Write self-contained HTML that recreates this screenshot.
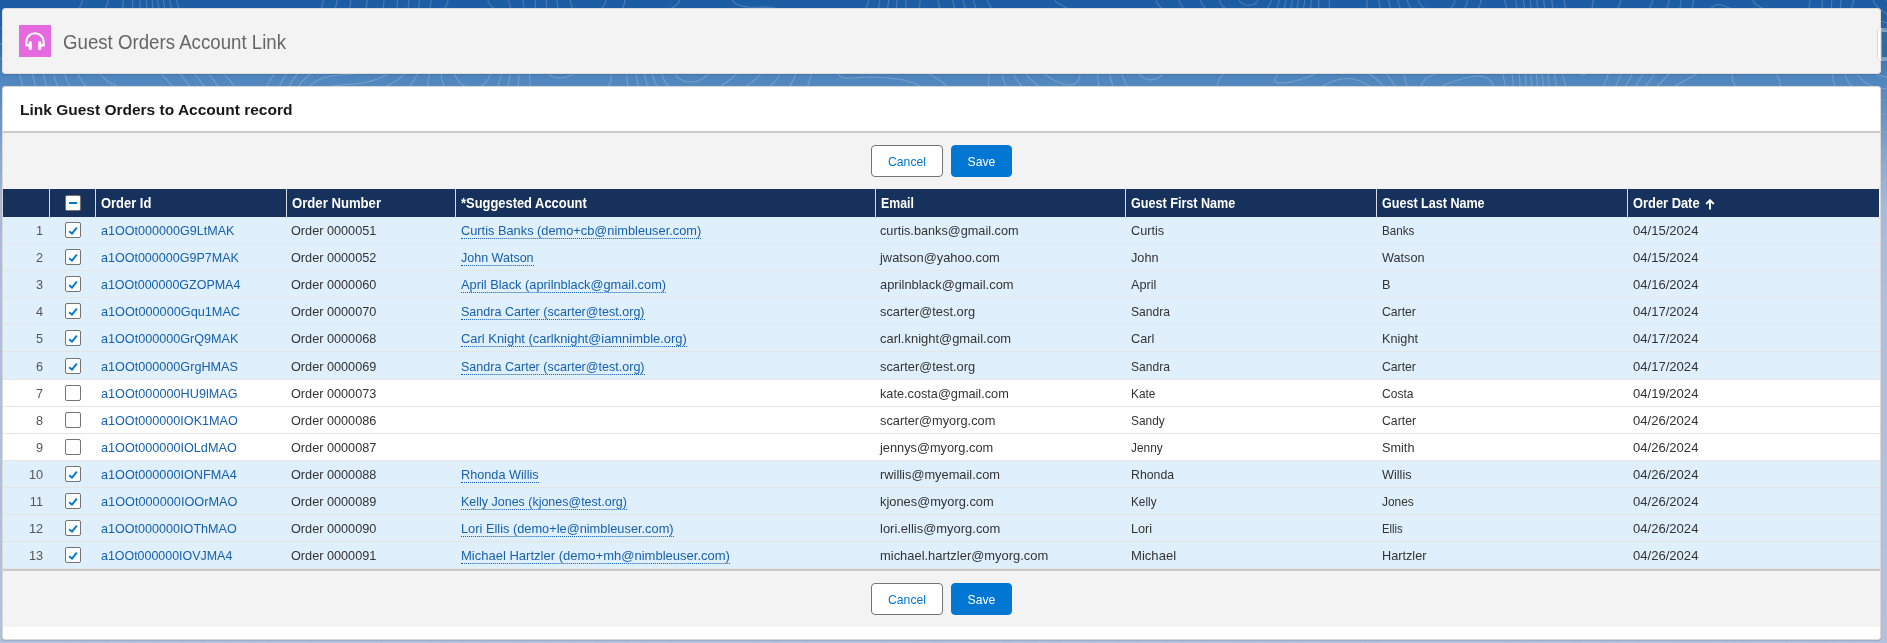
<!DOCTYPE html><html><head><meta charset="utf-8"><style>
*{box-sizing:border-box;margin:0;padding:0}
html,body{width:1887px;height:643px;overflow:hidden}
body{position:relative;font-family:"Liberation Sans",sans-serif;
 background:linear-gradient(180deg,#1c5ca2 0px,#2564a9 30px,#5087bf 80px,#6a96c8 120px,#8eabd3 165px,#a6bad9 210px,#adbfdc 300px,#b1c2dd 643px);}
.abs{position:absolute}
.card1{left:2px;top:8px;width:1879px;height:66px;background:#f3f3f3;border-radius:3px;box-shadow:0 1px 1px rgba(0,0,0,.10);border:1px solid #e0dcd8}
.icon{left:19px;top:25px;width:32px;height:32px;background:#e56ae0}
.title1{left:63px;top:30.5px;font-size:20px;line-height:23px;color:#666;white-space:nowrap;transform:scaleX(0.933);transform-origin:0 0}
.card2{left:2px;top:86px;width:1879px;height:554px;background:#fff;border-radius:3px;box-shadow:0 1px 1px rgba(0,0,0,.12);border:1px solid #dcd8d4;overflow:hidden}
.title2{left:20px;top:101px;font-size:15.5px;line-height:18px;font-weight:700;color:#181818;white-space:nowrap}
.hdrline{left:3px;top:131px;width:1877px;height:2px;background:#c9c9c9}
.bar{left:3px;width:1877px;background:#f3f3f3}
.btn{height:32px;border-radius:4px;font-size:12.2px;text-align:center;line-height:30px;padding-top:1px;white-space:nowrap}
.cancel{width:72px;background:#fff;border:1px solid #747474;color:#0176d3}
.save{width:61px;background:#0176d3;border:1px solid #0176d3;color:#fff}
.thead{left:3px;top:189px;width:1876px;height:28px;background:#16325c}
.th{top:5px;height:18px;color:#fff;font-weight:700;font-size:14px;line-height:18px;white-space:nowrap;transform-origin:0 0}
.thsep{top:0;width:1px;height:28px;background:#d8dde6}
.row{left:3px;width:1877px;border-bottom:1px solid #e5e5e5}
.sel{background:#dfeffc}
.unsel{background:#fff}
.td{font-size:12.7px;line-height:15px;color:#333;white-space:nowrap}
.num{text-align:right;width:40px;color:#555}
.lnk{color:#1660b0}
.ul{border-bottom:1px dotted #0b5cab;padding-bottom:0}
.cb{width:16px;height:16px;background:#fff;border:1px solid #747474;border-radius:2px}
</style></head><body><div id="wrap" style="position:absolute;left:0;top:0;width:1887px;height:643px;will-change:transform">
<svg class="abs" style="left:0;top:0" width="1887" height="643" viewBox="0 0 1887 643"><path d="M176.8 0.0 L177.0 2.2 L177.8 5.0 L178.6 7.0 L179.7 9.0 L180.8 11.0 M319.3 11.0 L320.5 9.0 L321.6 7.0 L322.4 5.0 L323.0 3.0 L323.4 0.0 M169.7 0.0 L170.0 3.0 L170.4 5.0 L171.1 7.0 L172.0 9.4 L172.7 11.0 M334.2 11.0 L335.0 8.9 L335.9 6.0 L336.4 4.0 L336.8 1.0 L336.8 0.0 M1564.3 0.0 L1564.5 3.0 L1565.0 5.6 L1565.6 8.0 L1566.3 10.0 L1566.6 11.0 M1591.0 10.4 L1591.8 8.0 L1592.4 6.0 L1593.0 3.1 L1593.2 1.0 L1593.3 0.0 M691.2 82.0 L694.0 81.7 L696.9 81.0 L699.0 80.3 L701.0 79.4 L703.0 78.3 L704.9 77.0 L706.2 76.0 L708.0 74.5 L709.4 73.0 L711.0 71.0 L711.7 70.0 M673.2 70.0 L674.0 72.1 L675.0 74.0 L676.5 76.0 L678.0 77.5 L679.9 79.0 L681.6 80.0 L684.0 81.0 L686.0 81.6 L689.0 82.0 L691.0 82.0 L691.2 82.0 M163.6 0.0 L163.8 3.0 L164.1 5.0 L164.9 8.0 L165.5 10.0 L165.8 11.0 M221.1 70.0 L222.8 72.0 L224.0 73.5 L225.3 75.0 L226.9 77.0 L228.0 78.3 L229.4 80.0 L231.0 81.9 L232.0 83.1 L233.7 85.0 L235.0 86.4 L236.5 88.0 L238.0 89.4 M264.0 89.6 L265.2 88.0 L266.6 86.0 L267.9 84.0 L269.0 82.3 L270.0 80.7 L271.1 79.0 L272.3 77.0 L273.6 75.0 L274.9 73.0 L276.0 71.4 L277.0 70.0 M349.0 10.2 L349.6 8.0 L350.1 6.0 L350.5 3.0 L350.7 0.0 M1239.4 0.0 L1240.2 2.0 L1242.0 3.4 L1244.0 4.4 L1246.3 5.0 L1249.0 5.2 L1251.3 5.0 L1254.0 4.2 L1256.0 3.1 L1257.0 2.0 L1257.8 0.0 M1552.0 0.0 L1552.1 2.0 L1552.4 5.0 L1552.9 8.0 L1553.3 10.0 L1553.5 11.0 M1577.0 70.7 L1578.1 72.0 L1580.0 73.8 L1582.0 74.8 L1585.0 74.7 L1587.0 73.6 L1588.6 72.0 L1590.0 70.0 M1616.0 11.0 L1617.2 9.0 L1618.3 7.0 L1619.4 5.0 L1620.3 3.0 L1620.8 0.0 M715.0 89.5 L717.0 88.4 L719.0 87.2 L721.0 86.0 L722.6 85.0 L724.1 84.0 L726.0 82.7 L728.0 81.3 L729.7 80.0 L731.0 78.9 L733.0 77.2 L734.3 76.0 L736.0 74.3 L737.2 73.0 L738.8 71.0 L739.0 70.8 M660.8 70.0 L661.2 72.0 L662.0 75.0 L662.8 77.0 L663.7 79.0 L664.8 81.0 L666.0 82.9 L667.0 84.2 L668.5 86.0 L670.0 87.5 L671.8 89.0 L672.0 89.2 M157.8 0.0 L158.0 3.0 L158.2 5.0 L158.8 8.0 L159.3 10.0 L159.6 11.0 M206.0 70.4 L207.4 72.0 L209.0 74.0 L210.0 75.3 L211.3 77.0 L212.8 79.0 L214.0 80.6 L215.0 82.0 L216.4 84.0 L217.8 86.0 L219.0 87.7 L220.0 89.2 M278.0 89.2 L279.0 87.0 L280.0 85.0 L281.0 83.0 L282.0 81.1 L283.0 79.4 L284.0 77.7 L285.0 76.0 L286.4 74.0 L287.8 72.0 L289.0 70.5 M365.6 11.0 L366.0 9.0 L366.6 6.0 L367.0 3.0 L367.1 1.0 L367.1 0.0 M570.4 0.0 L570.7 3.0 L571.3 5.0 L572.1 7.0 L573.1 9.0 L574.0 10.3 M599.0 10.7 L600.9 9.0 L602.0 7.9 L603.5 6.0 L604.7 4.0 L605.5 2.0 L605.8 0.0 M1219.7 0.0 L1220.1 2.0 L1221.1 4.0 L1222.7 6.0 L1224.0 7.2 L1226.0 8.9 L1227.5 10.0 L1228.0 10.3 M1265.0 10.4 L1266.5 9.0 L1268.0 7.3 L1269.0 5.9 L1270.1 4.0 L1271.0 1.1 L1271.1 0.0 M1543.9 0.0 L1544.0 3.0 L1544.2 5.0 L1544.7 8.0 L1545.1 10.0 L1545.3 11.0 M1561.8 70.0 L1562.2 72.0 L1562.9 75.0 L1563.4 77.0 L1564.0 79.3 L1564.7 82.0 L1565.3 84.0 L1566.0 86.4 L1566.9 89.0 L1567.0 89.3 M1601.0 89.2 L1602.0 87.8 L1603.1 86.0 L1604.2 84.0 L1605.2 82.0 L1606.1 80.0 L1607.0 77.7 L1607.9 75.0 L1608.5 73.0 L1609.0 71.0 L1609.3 70.0 M1647.0 10.4 L1648.2 9.0 L1649.9 7.0 L1651.0 5.4 L1652.0 3.4 L1652.7 1.0 L1652.8 0.0 M741.0 89.2 L743.0 88.1 L744.7 87.0 L746.3 86.0 L748.0 84.9 L750.0 83.5 L752.0 82.1 L753.4 81.0 L755.0 79.6 L756.8 78.0 L758.0 76.8 L759.7 75.0 L761.0 73.4 L762.1 72.0 L763.0 70.6 M652.0 71.0 L652.4 73.0 L653.0 75.8 L653.6 78.0 L654.3 80.0 L655.1 82.0 L656.0 84.0 L657.1 86.0 L658.3 88.0 L659.7 90.0 M152.1 0.0 L152.3 3.0 L152.6 6.0 L153.0 8.2 L153.5 11.0 M192.0 70.8 L193.0 72.0 L194.7 74.0 L196.0 75.5 L197.2 77.0 L198.7 79.0 L200.0 80.7 L201.0 82.1 L202.3 84.0 L203.7 86.0 L205.0 88.0 L206.0 89.6 M287.3 90.0 L288.2 88.0 L289.3 86.0 L290.3 84.0 L291.5 82.0 L292.8 80.0 L294.0 78.3 L295.0 77.0 L296.6 75.0 L298.0 73.5 L299.5 72.0 L301.0 70.6 M382.7 11.0 L383.1 9.0 L383.6 6.0 L383.9 3.0 L384.0 0.3 L384.0 0.0 M557.0 0.0 L557.2 3.0 L557.5 6.0 L558.0 8.9 L558.4 11.0 M621.0 10.9 L622.2 9.0 L623.2 7.0 L624.0 5.0 L624.8 2.0 L625.0 0.0 M679.7 0.0 L679.0 2.1 L677.4 4.0 L676.0 5.2 L674.0 6.7 L672.1 8.0 L670.7 9.0 L669.0 10.1 M643.8 70.0 L644.1 72.0 L644.6 75.0 L645.0 77.0 L645.7 80.0 L646.3 82.0 L647.0 84.1 L648.0 86.7 L649.0 88.9 L649.6 90.0 M766.0 89.3 L767.8 88.0 L769.1 87.0 L771.0 85.4 L772.4 84.0 L774.0 82.3 L775.2 81.0 L776.7 79.0 L778.0 77.1 L779.0 75.6 L780.0 73.8 L781.0 71.9 L781.9 70.0 M779.0 10.3 L777.0 9.2 L775.0 8.3 L773.0 7.8 L770.0 7.2 L767.0 7.1 L764.0 7.1 L761.0 7.1 L758.0 7.3 L755.0 7.3 L752.0 7.3 L749.0 7.1 L747.0 6.9 L744.0 6.4 L742.0 6.0 L739.0 5.1 L737.0 4.2 L735.0 3.2 L733.5 2.0 L732.5 0.0 M1200.8 0.0 L1201.1 2.0 L1202.0 4.0 L1203.4 6.0 L1205.0 7.9 L1206.1 9.0 L1208.0 10.8 M1275.0 10.8 L1276.2 9.0 L1277.3 7.0 L1278.1 5.0 L1279.0 2.0 L1279.2 0.0 M1536.9 0.0 L1537.0 2.5 L1537.3 5.0 L1537.8 8.0 L1538.2 10.0 L1538.4 11.0 M1553.8 70.0 L1554.1 72.0 L1554.6 75.0 L1555.0 77.2 L1555.5 80.0 L1555.9 83.0 L1556.3 85.0 L1556.8 88.0 L1557.0 89.4 M1613.2 90.0 L1614.5 88.0 L1615.6 86.0 L1616.6 84.0 L1617.6 82.0 L1618.5 80.0 L1619.3 78.0 L1620.1 76.0 L1621.0 73.3 L1621.7 71.0 L1622.0 70.2 M1666.0 10.1 L1667.0 8.0 L1667.8 6.0 L1668.5 4.0 L1669.0 1.0 L1669.0 0.0 M1074.0 84.0 L1075.7 83.0 L1077.0 81.9 L1078.3 80.0 L1079.2 78.0 L1080.0 75.2 L1080.3 73.0 L1080.4 70.0 M1041.0 70.4 L1042.5 72.0 L1044.0 73.5 L1045.8 75.0 L1047.1 76.0 L1049.0 77.3 L1051.0 78.5 L1053.0 79.6 L1055.0 80.7 L1057.0 81.6 L1059.0 82.4 L1061.0 83.1 L1063.8 84.0 L1066.0 84.5 L1069.0 84.8 L1072.0 84.6 L1074.0 84.0 M146.3 0.0 L146.4 3.0 L146.7 6.0 L147.0 8.7 L147.3 11.0 M177.0 70.8 L178.1 72.0 L179.9 74.0 L181.0 75.2 L182.5 77.0 L184.0 78.8 L185.0 80.0 L186.5 82.0 L188.0 84.0 L189.0 85.4 L190.1 87.0 L191.4 89.0 L192.0 90.0 M296.3 90.0 L297.5 88.0 L298.8 86.0 L300.0 84.2 L301.0 82.9 L302.6 81.0 L304.0 79.5 L305.6 78.0 L307.0 76.8 L309.0 75.2 L310.8 74.0 L312.4 73.0 L314.2 72.0 L316.2 71.0 L317.0 70.6 M396.4 11.0 L396.9 8.0 L397.1 6.0 L397.4 3.0 L397.5 0.0 M546.1 0.0 L546.2 3.0 L546.4 6.0 L546.7 9.0 L546.9 11.0 M635.5 70.0 L636.0 73.0 L636.3 75.0 L636.8 78.0 L637.1 80.0 L637.7 83.0 L638.2 85.0 L639.0 88.0 L639.6 90.0 M787.1 90.0 L788.5 88.0 L789.8 86.0 L791.0 84.1 L792.0 82.2 L793.0 80.3 L794.0 78.1 L794.9 76.0 L795.8 74.0 L796.6 72.0 L797.0 70.8 M864.0 10.2 L865.0 8.9 L866.3 7.0 L867.3 5.0 L868.1 3.0 L868.5 0.0 M1179.2 0.0 L1179.9 3.0 L1180.9 5.0 L1182.0 6.5 L1183.2 8.0 L1184.9 10.0 L1185.0 10.1 M1283.0 10.4 L1284.0 8.2 L1284.8 6.0 L1285.4 4.0 L1285.9 1.0 L1285.9 0.0 M1530.3 0.0 L1530.4 3.0 L1530.9 6.0 L1531.2 8.0 L1531.9 11.0 M1547.3 70.0 L1547.8 73.0 L1548.0 75.0 L1548.4 78.0 L1548.8 81.0 L1549.0 83.0 L1549.3 86.0 L1549.6 89.0 L1549.7 90.0 M1624.0 89.1 L1625.0 87.5 L1626.0 85.8 L1627.0 84.0 L1628.1 82.0 L1629.1 80.0 L1630.1 78.0 L1631.0 76.0 L1632.0 73.8 L1633.0 71.5 L1633.6 70.0 M1679.0 10.0 L1679.7 8.0 L1680.3 6.0 L1680.9 3.0 L1681.1 1.0 L1681.2 0.0 M1099.1 90.0 L1099.0 88.0 L1098.7 85.0 L1098.4 82.0 L1098.0 79.0 L1097.7 77.0 L1097.2 74.0 L1096.9 72.0 L1096.5 70.0 M1025.0 71.0 L1026.0 72.9 L1027.0 74.5 L1028.0 76.0 L1029.6 78.0 L1031.0 79.6 L1032.4 81.0 L1034.0 82.5 L1035.8 84.0 L1037.1 85.0 L1039.0 86.4 L1041.0 87.9 L1042.7 89.0 L1043.0 89.2 M140.0 0.0 L140.1 3.0 L140.2 6.0 L140.4 9.0 L140.6 11.0 M158.0 70.6 L159.3 72.0 L161.0 73.8 L162.2 75.0 L164.0 76.8 L165.1 78.0 L167.0 79.9 L168.0 81.0 L169.8 83.0 L171.0 84.3 L172.4 86.0 L174.0 88.0 L175.0 89.3 M307.0 89.2 L308.0 88.0 L309.9 86.0 L311.0 85.0 L313.0 83.4 L315.0 82.0 L316.7 81.0 L318.5 80.0 L320.7 79.0 L323.0 78.1 L325.0 77.5 L327.0 77.0 L330.0 76.3 L332.0 75.9 L335.0 75.5 L338.0 75.2 L340.3 75.0 L343.0 74.8 L346.0 74.6 L349.0 74.4 L352.0 74.1 L354.0 73.9 L357.0 73.6 L360.0 73.1 L362.0 72.8 L365.0 72.1 L367.0 71.6 L369.1 71.0 L370.0 70.7 M407.7 11.0 L408.0 8.9 L408.4 6.0 L408.7 3.0 L408.8 0.0 M535.2 0.0 L535.3 3.0 L535.5 6.0 L535.8 9.0 L536.0 10.5 M625.7 70.0 L626.1 72.0 L626.6 75.0 L626.9 78.0 L627.2 80.0 L627.4 83.0 L627.6 86.0 L627.7 89.0 L627.7 90.0 M806.3 90.0 L807.0 88.0 L808.0 85.0 L808.6 83.0 L809.3 81.0 L810.0 78.6 L810.8 76.0 L811.5 74.0 L812.1 72.0 L812.8 70.0 M877.3 11.0 L878.0 9.0 L878.9 6.0 L879.4 4.0 L879.8 1.0 L879.8 0.0 M987.4 0.0 L988.0 2.8 L989.0 4.7 L990.0 6.2 L991.5 8.0 L993.0 9.6 L994.0 10.7 M1012.6 70.0 L1013.2 72.0 L1014.0 74.4 L1015.0 76.8 L1016.0 78.8 L1017.0 80.4 L1018.1 82.0 L1019.6 84.0 L1021.0 85.5 L1022.5 87.0 L1024.0 88.4 L1025.0 89.2 M1113.8 90.0 L1113.0 87.0 L1112.5 85.0 L1111.9 83.0 L1111.1 80.0 L1110.6 78.0 L1110.0 75.6 L1109.3 73.0 L1108.8 71.0 L1108.6 70.0 M1071.0 10.3 L1069.0 9.2 L1067.0 8.1 L1065.0 7.0 L1063.0 6.0 L1061.0 5.0 L1059.2 4.0 L1057.5 3.0 L1056.0 1.8 L1055.0 0.0 M1156.3 0.0 L1157.0 2.6 L1158.0 4.2 L1159.4 6.0 L1161.0 7.7 L1162.3 9.0 L1164.0 10.6 M1289.6 11.0 L1290.3 9.0 L1291.0 7.0 L1291.8 4.0 L1292.1 2.0 L1292.2 0.0 M1418.8 0.0 L1419.2 2.0 L1420.1 4.0 L1421.7 6.0 L1423.0 7.2 L1425.0 8.8 L1426.9 10.0 L1427.0 10.0 M1447.0 10.6 L1449.0 9.3 L1450.6 8.0 L1452.0 6.6 L1453.2 5.0 L1454.3 3.0 L1454.9 0.0 M1523.5 0.0 L1523.7 3.0 L1524.0 5.3 L1524.5 8.0 L1525.0 10.0 M1541.5 70.0 L1541.9 73.0 L1542.2 75.0 L1542.5 78.0 L1542.8 81.0 L1543.0 83.8 L1543.1 86.0 L1543.3 89.0 L1543.4 90.0 M1633.0 89.9 L1634.3 88.0 L1635.6 86.0 L1636.9 84.0 L1638.0 82.3 L1639.0 80.6 L1640.0 78.9 L1641.1 77.0 L1642.3 75.0 L1643.4 73.0 L1644.6 71.0 L1645.0 70.2 M1691.1 11.0 L1692.0 8.1 L1692.6 6.0 L1693.0 4.0 L1693.4 1.0 L1693.4 0.0 M1753.0 0.0 L1753.6 2.0 L1755.0 3.5 L1756.8 5.0 L1758.4 6.0 L1760.2 7.0 L1762.2 8.0 L1764.3 9.0 L1766.5 10.0 L1767.0 10.2 M1808.0 10.3 L1808.8 8.0 L1809.3 6.0 L1809.9 3.0 L1810.0 1.0 L1810.1 0.0 M132.7 0.0 L132.7 3.0 L132.7 6.0 L132.7 9.0 L132.7 11.0 M98.5 70.0 L99.2 72.0 L100.4 74.0 L101.9 76.0 L103.0 77.2 L105.0 79.0 L106.3 80.0 L108.0 81.2 L110.0 82.5 L112.0 83.7 L114.0 84.7 L116.0 85.7 L118.0 86.5 L120.0 87.4 L122.0 88.1 L124.6 89.0 L125.0 89.1 M322.0 89.5 L324.0 88.5 L326.0 87.7 L328.3 87.0 L331.0 86.3 L333.0 85.9 L336.0 85.5 L339.0 85.1 L341.0 85.0 L344.0 84.7 L347.0 84.5 L350.0 84.3 L353.0 84.1 L355.0 83.9 L358.0 83.6 L361.0 83.2 L363.0 82.8 L366.0 82.3 L368.0 81.8 L371.0 81.1 L373.0 80.5 L375.0 79.8 L377.4 79.0 L379.9 78.0 L382.0 77.1 L384.0 76.1 L386.0 75.0 L387.7 74.0 L389.3 73.0 L391.0 71.8 L393.0 70.2 M418.1 11.0 L418.7 8.0 L419.0 5.7 L419.3 3.0 L419.4 0.0 M523.2 0.0 L523.3 3.0 L523.8 6.0 L524.1 8.0 L524.7 11.0 M545.0 70.9 L546.0 72.0 L548.0 73.8 L549.6 75.0 L551.2 76.0 L553.4 77.0 L556.0 77.7 L558.0 78.0 L561.0 78.0 L563.0 77.8 L566.0 77.1 L568.0 76.5 L570.0 75.8 L572.1 75.0 L574.5 74.0 L576.9 73.0 L579.0 72.1 L581.0 71.3 L582.0 71.0 M608.0 70.2 L609.4 72.0 L610.4 74.0 L611.0 76.1 L611.2 79.0 L610.9 81.0 L610.0 83.6 L609.0 85.2 L607.3 87.0 L605.9 88.0 L604.0 89.0 M925.0 89.5 L923.0 88.0 L921.5 87.0 L919.8 86.0 L918.0 85.0 L915.8 84.0 L913.4 83.0 L911.0 82.2 L909.0 81.6 L907.0 81.0 L904.0 80.3 L902.0 79.9 L899.0 79.3 L896.9 79.0 L894.0 78.6 L891.0 78.2 L888.7 78.0 L886.0 77.8 L883.0 77.5 L880.0 77.4 L877.0 77.2 L874.0 77.2 L871.0 77.1 L868.0 77.2 L865.0 77.3 L862.0 77.4 L859.0 77.6 L856.0 77.9 L854.0 78.0 L851.0 78.2 L848.0 78.3 L845.0 78.1 L843.0 77.7 L841.0 77.0 L839.0 75.2 L838.0 73.2 L837.7 71.0 L837.7 70.0 M887.0 10.7 L887.6 8.0 L888.0 6.0 L888.4 3.0 L888.6 0.0 M973.6 0.0 L974.0 2.7 L974.8 5.0 L975.7 7.0 L976.8 9.0 L978.0 10.9 M1001.6 70.0 L1001.9 73.0 L1002.2 75.0 L1002.9 78.0 L1003.4 80.0 L1004.1 82.0 L1005.0 84.0 L1006.1 86.0 L1007.5 88.0 L1009.0 89.8 M1129.0 89.9 L1128.0 88.0 L1126.9 86.0 L1125.9 84.0 L1125.0 82.0 L1124.0 79.8 L1123.0 77.4 L1122.1 75.0 L1121.4 73.0 L1120.7 71.0 L1120.4 70.0 M1296.2 11.0 L1297.0 8.2 L1297.5 6.0 L1298.0 3.5 L1298.3 1.0 L1298.3 0.0 M1407.5 0.0 L1407.9 3.0 L1408.8 5.0 L1409.9 7.0 L1411.0 8.6 L1412.1 10.0 L1412.9 11.0 M1463.0 10.8 L1464.2 9.0 L1465.4 7.0 L1466.3 5.0 L1467.0 3.0 L1467.4 0.0 M1515.8 0.0 L1516.0 3.0 L1516.3 5.0 L1517.0 7.8 L1517.6 10.0 L1517.9 11.0 M1536.0 70.0 L1536.4 73.0 L1536.7 76.0 L1537.0 79.0 L1537.1 81.0 L1537.3 84.0 L1537.4 87.0 L1537.5 90.0 M1643.0 89.5 L1644.2 88.0 L1645.7 86.0 L1647.0 84.3 L1648.0 82.9 L1649.4 81.0 L1650.9 79.0 L1652.0 77.5 L1653.1 76.0 L1654.6 74.0 L1656.0 72.1 L1657.0 70.8 M1709.0 10.5 L1710.3 9.0 L1712.0 7.4 L1713.8 6.0 L1715.7 5.0 L1718.0 4.4 L1721.0 4.7 L1723.0 5.4 L1725.0 6.2 L1727.0 7.1 L1729.0 8.1 L1731.0 9.1 L1733.0 10.1 M1821.4 11.0 L1821.9 8.0 L1822.1 6.0 L1822.3 3.0 L1822.4 0.0 M123.3 0.0 L123.1 3.0 L123.0 5.0 L122.5 8.0 L122.0 11.0 M77.1 70.0 L77.8 73.0 L78.5 75.0 L79.4 77.0 L80.5 79.0 L81.8 81.0 L83.0 82.6 L84.2 84.0 L86.0 86.0 L87.0 87.0 L89.0 88.8 L90.0 89.7 M379.0 89.0 L381.0 88.3 L383.0 87.6 L385.0 86.8 L387.0 86.0 L389.2 85.0 L391.1 84.0 L393.0 83.0 L395.0 81.8 L397.0 80.4 L398.9 79.0 L400.1 78.0 L402.0 76.2 L403.2 75.0 L405.0 73.0 L406.0 71.7 L407.0 70.4 M429.1 11.0 L429.9 8.0 L430.4 6.0 L430.9 3.0 L431.1 1.0 L431.1 0.0 M508.7 0.0 L509.0 2.4 L509.7 5.0 L510.4 7.0 L511.2 9.0 L512.0 10.8 M528.6 70.0 L529.0 72.6 L529.4 75.0 L529.7 78.0 L530.0 80.4 L530.2 83.0 L530.4 86.0 L530.5 89.0 L530.5 90.0 M1504.8 0.0 L1505.0 2.2 L1505.7 5.0 L1506.5 7.0 L1507.4 9.0 L1508.0 10.4 M1530.5 70.0 L1530.9 73.0 L1531.1 75.0 L1531.4 78.0 L1531.6 81.0 L1531.7 84.0 L1531.8 87.0 L1531.7 90.0 M1374.0 89.5 L1372.1 88.0 L1370.8 87.0 L1369.0 85.8 L1367.0 84.5 L1365.0 83.4 L1363.0 82.4 L1361.0 81.5 L1359.0 80.7 L1356.7 80.0 L1354.0 79.3 L1352.0 79.0 L1349.0 78.7 L1346.0 78.6 L1343.0 78.8 L1341.0 79.1 L1338.0 79.7 L1336.0 80.3 L1333.7 81.0 L1331.0 82.0 L1329.0 82.9 L1327.0 83.8 L1325.0 84.8 L1323.0 85.9 L1321.0 87.0 L1319.3 88.0 L1317.7 89.0 L1317.0 89.4 M950.0 89.4 L948.7 88.0 L947.0 86.3 L945.6 85.0 L944.0 83.7 L942.0 82.1 L940.5 81.0 L939.0 79.9 L937.0 78.6 L935.0 77.3 L933.0 76.1 L931.1 75.0 L929.2 74.0 L927.3 73.0 L925.2 72.0 L923.0 71.0 L923.0 71.0 M895.8 11.0 L896.1 9.0 L896.5 6.0 L896.8 3.0 L896.9 0.0 M963.3 0.0 L963.7 3.0 L964.2 5.0 L965.0 7.1 L966.0 9.3 L966.8 11.0 M989.6 70.0 L989.3 73.0 L989.0 75.7 L988.7 78.0 L988.5 81.0 L988.5 84.0 L988.8 87.0 L989.3 89.0 L989.7 90.0 M1217.3 90.0 L1217.3 87.0 L1217.7 84.0 L1218.2 82.0 L1219.0 80.0 L1220.1 78.0 L1221.6 76.0 L1223.0 74.4 L1224.6 73.0 L1226.0 71.9 L1228.0 70.6 M1303.0 10.4 L1303.5 8.0 L1304.0 5.6 L1304.4 3.0 L1304.5 0.0 M1398.0 0.0 L1398.1 2.0 L1399.0 5.0 L1399.8 7.0 L1400.9 9.0 L1402.0 10.9 M1476.3 11.0 L1477.6 9.0 L1478.8 7.0 L1479.8 5.0 L1480.6 3.0 L1481.0 0.6 L1481.0 0.0 M1654.0 89.6 L1655.5 88.0 L1657.0 86.4 L1658.3 85.0 L1660.0 83.3 L1661.2 82.0 L1663.0 80.1 L1664.1 79.0 L1666.0 77.1 L1667.1 76.0 L1669.0 74.2 L1670.3 73.0 L1672.0 71.4 L1673.0 70.5 M1831.0 10.6 L1831.3 8.0 L1831.6 5.0 L1831.8 2.0 L1831.8 0.0 M1155.0 79.2 L1152.0 79.8 L1149.0 79.6 L1146.4 79.0 L1144.1 78.0 L1142.5 77.0 L1141.0 75.8 L1139.1 74.0 L1138.0 72.7 L1136.8 71.0 L1136.1 70.0 M1165.9 70.0 L1164.7 72.0 L1163.2 74.0 L1162.0 75.2 L1160.0 76.8 L1158.0 78.0 L1156.0 78.9 L1155.0 79.2 M108.1 0.0 L107.9 2.0 L107.0 5.0 L106.1 7.0 L105.0 8.8 L104.0 10.3 M64.0 70.4 L64.5 73.0 L65.0 75.0 L66.0 78.0 L66.8 80.0 L67.7 82.0 L68.8 84.0 L70.0 86.0 L71.0 87.6 L72.0 89.0 L72.8 90.0 M487.8 0.0 L488.3 2.0 L489.5 4.0 L491.0 5.7 L492.2 7.0 L494.0 8.8 L495.1 10.0 L496.0 11.0 M518.8 70.0 L518.9 73.0 L518.8 76.0 L518.7 79.0 L518.5 82.0 L518.2 85.0 L517.9 87.0 L517.4 90.0 M406.0 89.3 L407.5 88.0 L409.0 86.6 L410.4 85.0 L412.0 83.0 L413.0 81.6 L414.0 80.0 L415.2 78.0 L416.3 76.0 L417.3 74.0 L418.2 72.0 L419.0 70.2 M443.0 11.0 L444.2 9.0 L445.4 7.0 L446.5 5.0 L447.4 3.0 L448.0 0.5 L448.0 0.0 M953.0 0.0 L953.1 2.0 L953.7 5.0 L954.3 7.0 L955.1 9.0 L955.9 11.0 M970.0 70.5 L968.0 71.6 L966.0 72.3 L963.0 72.6 L960.0 72.4 L957.6 72.0 L955.0 71.3 L954.0 71.0 M905.4 11.0 L905.7 8.0 L905.9 5.0 L906.0 3.0 L906.1 0.0 M1388.8 0.0 L1389.0 2.6 L1389.5 5.0 L1390.2 7.0 L1391.0 9.0 L1392.0 11.0 M1524.8 70.0 L1525.1 72.0 L1525.4 75.0 L1525.7 78.0 L1525.9 81.0 L1526.0 84.0 L1526.0 86.0 L1526.0 88.7 L1526.0 90.0 M1386.0 89.1 L1385.0 87.9 L1383.3 86.0 L1382.0 84.6 L1380.5 83.0 L1379.0 81.6 L1377.2 80.0 L1376.0 78.9 L1374.0 77.3 L1372.2 76.0 L1370.8 75.0 L1369.0 73.8 L1367.0 72.6 L1365.0 71.6 L1363.0 70.6 M1323.0 71.0 L1321.0 71.7 L1319.0 72.5 L1317.0 73.3 L1315.0 74.1 L1312.7 75.0 L1310.2 76.0 L1308.0 76.9 L1306.0 77.6 L1304.0 78.3 L1302.0 79.0 L1299.0 79.9 L1297.0 80.5 L1295.0 81.0 L1292.0 81.7 L1290.0 82.1 L1287.0 82.6 L1284.0 82.9 L1282.0 83.1 L1279.0 83.1 L1277.0 82.8 L1275.0 81.8 L1274.9 79.0 L1275.8 77.0 L1276.9 75.0 L1278.0 73.3 L1279.0 71.8 L1280.0 70.3 M1310.0 10.9 L1310.5 8.0 L1310.9 5.0 L1311.1 3.0 L1311.2 0.0 M1670.0 89.6 L1672.0 88.3 L1674.0 87.0 L1675.5 86.0 L1677.1 85.0 L1679.0 83.9 L1681.0 82.7 L1683.0 81.6 L1685.0 80.5 L1687.0 79.4 L1689.0 78.3 L1691.0 77.1 L1693.0 76.0 L1694.6 75.0 L1696.2 74.0 L1698.0 72.8 L1700.0 71.3 L1701.0 70.5 M1799.0 70.9 L1801.0 71.9 L1803.0 72.6 L1805.0 73.1 L1808.0 73.4 L1810.5 73.0 L1813.0 72.0 L1814.7 71.0 L1815.0 70.8 M1840.0 10.1 L1840.3 8.0 L1840.7 5.0 L1841.0 2.0 L1841.1 0.0 M1886.9 0.0 L1887.3 2.0 L1888.3 4.0 L1890.0 6.0 L1891.1 7.0 L1893.0 8.5 L1895.0 9.9 L1896.8 11.0 L1898.5 12.0 L1899.0 12.2 M82.4 0.0 L82.0 2.5 L81.0 4.8 L80.0 6.5 L79.0 8.0 L77.5 10.0 L77.0 10.7 M53.0 70.3 L53.5 73.0 L54.0 75.2 L54.7 78.0 L55.3 80.0 L56.0 82.0 L57.0 84.7 L57.9 87.0 L58.8 89.0 L59.0 89.3 M938.2 0.0 L938.5 3.0 L939.0 5.0 L939.9 8.0 L940.7 10.0 L941.0 10.8 M919.2 11.0 L919.5 8.0 L919.8 5.0 L920.0 2.3 L920.1 0.0 M1378.9 0.0 L1379.0 2.0 L1379.5 5.0 L1380.0 7.1 L1380.9 10.0 L1381.0 10.4 M1518.5 70.0 L1519.0 72.9 L1519.3 75.0 L1519.6 78.0 L1519.8 81.0 L1520.0 84.0 L1520.0 87.0 L1519.9 90.0 M1397.0 89.2 L1396.0 87.6 L1395.0 85.9 L1393.8 84.0 L1392.4 82.0 L1391.0 80.0 L1390.0 78.6 L1388.8 77.0 L1387.1 75.0 L1386.0 73.7 L1384.5 72.0 L1383.0 70.5 M1318.2 11.0 L1318.5 8.0 L1318.8 5.0 L1318.9 2.0 L1319.0 0.0 M1837.0 89.0 L1836.0 87.5 L1835.0 85.6 L1834.0 83.2 L1833.4 81.0 L1833.0 79.0 L1832.7 76.0 L1832.7 73.0 L1833.0 70.0 M1850.4 11.0 L1851.1 9.0 L1852.0 6.4 L1852.8 4.0 L1853.3 2.0 L1853.5 0.0 M1873.3 0.0 L1874.0 2.5 L1875.0 4.1 L1876.6 6.0 L1878.0 7.4 L1879.9 9.0 L1881.1 10.0 L1883.0 11.5 L1885.0 12.9 L1886.6 14.0 L1888.2 15.0 L1890.0 16.0 L1892.0 17.1 L1894.0 18.0 L1896.3 19.0 L1898.9 20.0 L1899.0 20.0 M428.0 90.0 L427.8 87.0 L427.9 84.0 L428.1 82.0 L428.4 79.0 L428.9 76.0 L429.3 74.0 L429.9 71.0 L430.0 70.3 M510.3 70.0 L510.1 73.0 L510.0 75.0 L509.6 78.0 L509.1 81.0 L508.7 83.0 L508.0 85.8 L507.3 88.0 L506.6 90.0 M1739.0 89.2 L1737.5 88.0 L1736.0 86.5 L1734.9 85.0 L1733.7 83.0 L1732.9 81.0 L1732.3 78.0 L1732.2 75.0 L1732.7 72.0 L1733.0 70.9 M1773.0 70.4 L1774.4 72.0 L1775.9 74.0 L1777.0 75.6 L1778.0 77.3 L1779.0 79.4 L1779.9 82.0 L1780.2 84.0 L1780.0 86.7 L1779.2 89.0 L1779.0 89.3 M1366.8 0.0 L1366.9 3.0 L1367.0 5.0 L1367.4 8.0 L1367.8 11.0 M1329.4 11.0 L1329.3 8.0 L1329.3 5.0 L1329.3 2.0 L1329.3 0.0 M1855.0 89.2 L1853.6 88.0 L1852.0 86.5 L1850.7 85.0 L1849.1 83.0 L1848.0 81.3 L1847.0 79.4 L1846.0 77.2 L1845.3 75.0 L1844.7 73.0 L1844.2 70.0 M1878.5 20.0 L1881.0 20.9 L1883.0 21.7 L1885.0 22.5 L1887.0 23.3 L1889.1 24.0 L1892.0 25.0 L1894.0 25.6 L1896.0 26.1 L1899.0 26.9 M0.0 28.0 L1.0 28.0 L2.0 28.0 L3.0 28.0 L3.0 28.0 L4.0 28.0 M42.5 70.0 L43.0 72.5 L43.6 75.0 L44.0 77.0 L44.8 80.0 L45.3 82.0 L46.0 84.5 L46.7 87.0 L47.3 89.0 L47.6 90.0 M446.8 90.0 L445.3 88.0 L444.1 86.0 L443.2 84.0 L442.5 82.0 L441.9 80.0 L441.4 77.0 L441.2 74.0 L441.2 71.0 L441.2 70.0 M501.7 70.0 L501.4 73.0 L501.0 75.3 L500.4 78.0 L499.9 80.0 L499.0 82.5 L498.0 84.9 L497.0 87.0 L496.0 88.7 L495.2 90.0 M1408.0 89.3 L1407.3 87.0 L1406.7 85.0 L1406.0 82.6 L1405.3 80.0 L1404.8 78.0 L1404.1 75.0 L1403.7 73.0 L1403.2 70.0 M1511.1 70.0 L1511.8 73.0 L1512.2 75.0 L1512.7 78.0 L1513.0 81.0 L1513.1 83.0 L1513.3 86.0 L1513.3 89.0 L1513.3 90.0 M1899.0 89.5 L1896.0 89.5 L1893.0 89.4 L1890.0 89.3 L1887.0 89.0 L1885.0 88.8 L1882.0 88.4 L1879.6 88.0 L1877.0 87.4 L1875.0 86.8 L1872.5 86.0 L1870.1 85.0 L1868.1 84.0 L1866.3 83.0 L1864.8 82.0 L1863.0 80.6 L1861.2 79.0 L1860.0 77.7 L1858.7 76.0 L1857.4 74.0 L1856.3 72.0 L1855.5 70.0 M1878.0 30.1 L1881.0 30.4 L1884.0 30.9 L1886.0 31.3 L1889.0 31.9 L1891.0 32.4 L1894.0 33.0 L1896.0 33.4 L1899.0 34.0 M0.0 43.6 L1.0 43.6 L2.0 43.7 L3.0 43.7 L4.0 43.9 M31.3 70.0 L32.0 72.5 L32.7 75.0 L33.2 77.0 L34.0 80.0 L34.5 82.0 L35.0 84.4 L35.5 87.0 L36.0 89.6 M475.0 88.0 L472.0 88.1 L470.0 87.9 L467.0 87.1 L465.0 86.2 L463.0 85.1 L461.4 84.0 L460.0 82.7 L458.4 81.0 L457.0 79.0 L456.0 77.1 L455.1 75.0 L454.6 73.0 L454.1 70.0 M491.3 70.0 L490.9 72.0 L490.0 75.0 L489.2 77.0 L488.2 79.0 L487.0 80.8 L486.0 82.1 L484.1 84.0 L482.8 85.0 L481.0 86.1 L479.0 87.1 L476.0 87.9 L475.0 88.0 M1420.6 90.0 L1421.0 87.3 L1421.6 85.0 L1422.5 83.0 L1423.7 81.0 L1425.0 79.6 L1426.9 78.0 L1428.5 77.0 L1430.5 76.0 L1433.0 75.0 L1435.0 74.4 L1437.0 73.8 L1439.9 73.0 L1442.0 72.5 L1444.0 72.0 L1447.0 71.3 L1449.0 70.8 M1501.0 70.9 L1502.0 72.9 L1502.8 75.0 L1503.5 77.0 L1504.0 79.0 L1504.7 82.0 L1505.0 84.3 L1505.3 87.0 L1505.4 90.0 M1899.0 77.9 L1896.0 77.8 L1893.0 77.7 L1890.0 77.5 L1887.0 77.1 L1885.0 76.8 L1882.0 76.1 L1880.0 75.5 L1878.0 74.8 L1876.0 73.8 L1874.0 72.7 L1872.0 71.2 L1871.0 70.2 M1878.0 41.8 L1881.0 41.3 L1884.0 41.1 L1887.0 41.2 L1890.0 41.4 L1893.0 41.7 L1895.2 42.0 L1898.0 42.4 L1899.0 42.5 M0.0 58.6 L1.0 58.7 L2.0 58.8 L3.0 59.0 L3.0 59.0 L4.0 59.3 M17.0 70.3 L18.0 72.0 L19.0 74.0 L20.0 76.3 L20.9 79.0 L21.5 81.0 L22.0 83.0 L22.5 86.0 L22.9 89.0 L22.9 90.0 M1438.0 89.6 L1439.8 88.0 L1441.2 87.0 L1443.0 85.9 L1445.0 84.8 L1447.0 83.9 L1449.2 83.0 L1452.0 82.0 L1454.0 81.3 L1456.0 80.7 L1458.3 80.0 L1461.0 79.2 L1463.0 78.7 L1465.7 78.0 L1468.0 77.5 L1470.3 77.0 L1473.0 76.5 L1476.0 76.2 L1479.0 76.1 L1482.0 76.4 L1484.6 77.0 L1486.9 78.0 L1488.4 79.0 L1490.0 80.4 L1491.3 82.0 L1492.6 84.0 L1493.5 86.0 L1494.3 88.0 L1494.8 90.0" fill="none" stroke="#fff" stroke-opacity=".2" stroke-width="1.1"/><path d="M1899.0 186.6 L1897.0 187.8 L1895.3 189.0 L1894.0 190.0 L1892.0 191.8 L1890.9 193.0 L1889.3 195.0 L1888.0 197.0 L1887.0 199.0 L1886.3 201.0 L1885.9 203.0 L1885.7 206.0 L1886.0 209.0 L1886.5 211.0 L1887.4 213.0 L1888.6 215.0 L1890.0 216.7 L1891.2 218.0 L1893.0 219.5 L1895.0 220.9 L1896.8 222.0 L1898.7 223.0 L1899.0 223.1 M1899.0 173.9 L1897.0 174.6 L1895.0 175.3 L1893.0 176.1 L1891.0 177.0 L1889.0 178.0 L1887.0 179.1 L1885.0 180.3 L1883.0 181.7 L1881.2 183.0 L1880.0 184.0 L1878.9 185.0 M1899.0 162.3 L1896.0 162.9 L1894.0 163.4 L1891.4 164.0 L1889.0 164.6 L1887.0 165.2 L1884.5 166.0 L1882.0 166.8 L1880.0 167.5 L1878.6 168.0 M0.0 202.2 L1.0 202.2 L2.0 202.3 L3.0 202.3 L4.0 202.4 M4.0 165.4 L3.0 165.2 L2.0 165.0 L1.8 165.0 L1.0 164.9 L0.0 164.9 M1899.0 149.4 L1896.0 149.7 L1893.0 149.9 L1891.0 150.1 L1888.0 150.4 L1885.0 150.7 L1882.0 150.9 L1879.3 151.0 L1878.0 151.0 M0.0 214.8 L1.0 214.8 L2.0 214.9 L2.7 215.0 L3.0 215.0 L4.0 215.2 M4.0 154.7 L3.0 154.6 L2.0 154.5 L1.0 154.5 L0.0 154.4 M4.0 146.5 L3.0 146.4 L2.0 146.4 L1.0 146.3 L0.0 146.3 M1899.0 133.1 L1896.0 133.0 L1894.0 132.9 L1891.0 132.7 L1888.0 132.5 L1885.0 132.1 L1883.0 131.8 L1880.0 131.3 L1878.7 131.0 M4.0 138.9 L3.0 138.9 L2.0 138.9 L1.0 138.9 L0.0 138.9 M1899.0 115.2 L1896.0 115.1 L1894.0 114.9 L1891.0 114.7 L1888.0 114.4 L1885.0 114.0 L1883.0 113.7 L1880.0 113.2 L1878.0 112.8 M1899.0 101.1 L1896.0 101.0 L1894.0 101.0 L1891.0 100.8 L1888.0 100.6 L1885.0 100.4 L1882.0 100.0 L1880.0 99.7 L1878.0 99.3 M4.0 131.3 L3.0 131.3 L2.0 131.3 L1.0 131.3 L0.0 131.3 M4.0 122.9 L3.0 123.0 L2.0 123.0 L2.0 123.0 L1.0 123.0 L0.0 123.0 M4.0 112.1 L3.0 112.3 L2.0 112.4 L1.0 112.5 L0.0 112.5" fill="none" stroke="#fff" stroke-opacity=".1" stroke-width="1.1"/><path d="M1300.8 650.0 L1302.3 649.0 L1304.0 647.0 L1305.0 645.4 L1306.0 643.1 L1306.6 641.0 L1306.9 638.0 L1306.4 636.0 M1299.0 636.6 L1298.0 638.3 L1297.1 641.0 L1296.8 643.0 L1296.9 646.0 L1297.4 648.0 L1298.9 650.0 L1300.8 650.0 M1317.9 659.0 L1318.6 657.0 L1319.2 655.0 L1320.0 652.6 L1320.8 650.0 L1321.5 648.0 L1322.1 646.0 L1322.9 643.0 L1323.4 641.0 L1324.0 638.0 L1324.3 636.0 M1282.0 636.9 L1281.5 639.0 L1281.0 641.1 L1280.5 644.0 L1280.0 647.0 L1279.8 649.0 L1279.5 652.0 L1279.3 655.0 L1279.2 658.0 L1279.2 659.0 M1327.8 659.0 L1328.4 657.0 L1329.0 654.9 L1329.8 652.0 L1330.4 650.0 L1331.0 647.8 L1331.8 645.0 L1332.3 643.0 L1333.0 640.2 L1333.5 638.0 L1333.8 636.0 M1273.4 636.0 L1272.9 638.0 L1272.3 641.0 L1271.9 643.0 L1271.5 646.0 L1271.1 649.0 L1270.8 651.0 L1270.6 654.0 L1270.3 657.0 L1270.2 659.0 M982.3 659.0 L980.0 658.3 L978.0 657.8 L975.0 657.6 L972.0 657.8 L970.0 658.1 L967.0 659.0 M1335.9 659.0 L1336.5 657.0 L1337.0 655.0 L1337.8 652.0 L1338.4 650.0 L1339.0 647.6 L1339.7 645.0 L1340.3 643.0 L1341.0 640.1 L1341.5 638.0 L1341.9 636.0 M1266.0 636.0 L1265.4 639.0 L1265.0 641.1 L1264.5 644.0 L1264.1 647.0 L1263.9 649.0 L1263.6 652.0 L1263.3 655.0 L1263.1 658.0 L1263.0 659.0 M1001.8 659.0 L1000.5 657.0 L999.0 655.1 L998.0 654.0 L996.0 652.1 L994.7 651.0 L993.0 649.8 L991.0 648.7 L989.0 647.7 L987.0 646.9 L984.0 646.0 L982.0 645.6 L979.0 645.3 L976.0 645.2 L973.0 645.4 L970.0 645.8 L968.0 646.3 L965.6 647.0 L963.0 647.9 L961.0 648.8 L959.0 649.8 L957.0 651.0 L955.5 652.0 L954.0 653.1 L952.0 654.7 L950.5 656.0 L949.0 657.5 L947.6 659.0 M1343.3 659.0 L1344.0 656.3 L1344.6 654.0 L1345.1 652.0 L1346.0 649.0 L1346.5 647.0 L1347.1 645.0 L1347.9 642.0 L1348.5 640.0 L1349.0 637.9 L1349.5 636.0 M1259.0 636.6 L1258.6 639.0 L1258.2 642.0 L1257.9 644.0 L1257.6 647.0 L1257.3 650.0 L1257.0 653.0 L1256.9 655.0 L1256.7 658.0 L1256.6 659.0 M1899.0 468.4 L1897.0 469.9 L1895.6 471.0 L1894.0 472.4 L1892.4 474.0 L1891.0 475.6 L1890.0 477.0 L1889.1 480.0 L1890.0 482.4 L1892.0 483.9 L1894.0 484.8 L1896.0 485.4 L1898.5 486.0 L1899.0 486.1 M488.5 642.0 L491.0 641.6 L493.6 641.0 L496.0 640.3 L498.0 639.5 L500.0 638.6 L502.0 637.5 L503.0 636.9 M464.0 636.5 L466.0 637.7 L468.0 638.7 L470.0 639.5 L472.0 640.3 L474.5 641.0 L477.0 641.6 L479.7 642.0 L482.0 642.2 L485.0 642.3 L488.0 642.1 L488.5 642.0 M221.5 648.0 L223.3 647.0 L225.0 645.5 L226.3 644.0 L227.7 642.0 L228.9 640.0 L229.8 638.0 L230.6 636.0 M202.1 636.0 L203.6 638.0 L205.0 639.7 L206.2 641.0 L208.0 642.8 L209.3 644.0 L211.0 645.4 L213.0 646.8 L215.0 647.8 L217.0 648.4 L220.0 648.5 L221.5 648.0 M1013.2 659.0 L1012.4 657.0 L1011.5 655.0 L1010.4 653.0 L1009.2 651.0 L1008.0 649.3 L1006.9 648.0 L1005.0 646.0 L1003.9 645.0 L1002.0 643.5 L1000.0 642.1 L998.1 641.0 L996.2 640.0 L994.0 639.0 L992.0 638.3 L990.0 637.6 L987.8 637.0 L987.0 636.8 M968.0 636.9 L966.0 637.4 L964.0 638.0 L961.2 639.0 L959.0 639.9 L957.0 640.8 L955.0 641.9 L953.0 643.0 L951.4 644.0 L949.9 645.0 L948.0 646.4 L946.0 648.0 L944.8 649.0 L943.0 650.8 L941.8 652.0 L940.1 654.0 L939.0 655.4 L937.8 657.0 L936.4 659.0 M486.0 650.0 L489.0 649.6 L491.8 649.0 L494.0 648.4 L496.0 647.7 L498.0 646.9 L500.0 646.0 L502.0 645.0 L504.0 643.8 L506.0 642.5 L508.0 641.0 L509.3 640.0 L511.0 638.6 L512.7 637.0 L513.0 636.7 M451.0 636.6 L452.6 638.0 L454.0 639.2 L456.0 640.8 L457.6 642.0 L459.1 643.0 L461.0 644.1 L463.0 645.2 L465.0 646.2 L467.0 647.1 L469.6 648.0 L472.0 648.7 L474.0 649.2 L477.0 649.8 L479.0 650.0 L482.0 650.2 L485.0 650.1 L486.0 650.0 M1899.0 449.9 L1897.0 451.0 L1895.2 452.0 L1893.4 453.0 L1891.7 454.0 L1890.0 455.0 L1888.0 456.2 L1886.0 457.4 L1884.0 458.7 L1882.0 459.9 L1880.0 461.0 L1878.3 462.0 M1878.0 500.1 L1881.0 500.3 L1884.0 500.5 L1887.0 500.6 L1890.0 500.7 L1893.0 500.8 L1896.0 500.8 L1899.0 500.8 M1350.4 659.0 L1351.0 656.6 L1351.7 654.0 L1352.2 652.0 L1353.0 649.4 L1353.7 647.0 L1354.3 645.0 L1355.0 642.8 L1355.8 640.0 L1356.4 638.0 L1357.0 636.0 M1252.2 636.0 L1252.0 638.0 L1251.7 641.0 L1251.4 644.0 L1251.1 647.0 L1251.0 649.1 L1250.8 652.0 L1250.7 655.0 L1250.6 658.0 L1250.5 659.0 M235.1 659.0 L236.0 656.8 L237.0 654.1 L237.8 652.0 L238.5 650.0 L239.3 648.0 L240.0 645.9 L241.0 643.1 L241.7 641.0 L242.3 639.0 L243.0 636.6 M191.1 636.0 L192.3 638.0 L193.5 640.0 L194.8 642.0 L196.0 643.9 L197.0 645.4 L198.0 647.0 L199.3 649.0 L200.6 651.0 L201.8 653.0 L203.0 654.9 L204.0 656.6 L205.0 658.2 L205.5 659.0 M1022.8 659.0 L1022.0 656.0 L1021.4 654.0 L1020.7 652.0 L1019.9 650.0 L1018.9 648.0 L1017.7 646.0 L1016.4 644.0 L1015.0 642.3 L1013.8 641.0 L1012.0 639.3 L1010.5 638.0 L1009.0 636.9 M948.0 636.5 L946.0 637.8 L944.3 639.0 L942.9 640.0 L941.0 641.5 L939.3 643.0 L938.0 644.2 L936.1 646.0 L935.0 647.2 L933.5 649.0 L932.0 650.9 L931.0 652.3 L929.9 654.0 L928.7 656.0 L927.7 658.0 L927.1 659.0 M1785.3 659.0 L1784.4 657.0 L1783.5 655.0 L1782.4 653.0 L1781.1 651.0 L1780.0 649.5 L1778.7 648.0 L1777.0 646.4 L1775.0 645.0 L1773.0 644.1 L1771.0 643.7 L1768.0 643.8 L1766.0 644.5 L1764.0 645.7 L1762.6 647.0 L1761.0 648.9 L1760.0 650.6 L1759.0 652.6 L1758.1 655.0 L1757.4 657.0 L1756.9 659.0 M1878.8 224.0 L1880.3 225.0 L1882.0 226.0 L1884.0 227.1 L1886.0 228.1 L1888.0 229.0 L1890.6 230.0 L1893.0 230.8 L1895.0 231.4 L1897.3 232.0 L1899.0 232.4 M489.3 659.0 L492.0 658.2 L494.0 657.5 L496.0 656.7 L498.0 655.7 L500.0 654.6 L502.0 653.4 L504.0 652.1 L505.5 651.0 L507.0 649.9 L509.0 648.3 L510.5 647.0 L512.0 645.7 L513.8 644.0 L515.0 642.8 L516.8 641.0 L518.0 639.6 L519.4 638.0 L521.0 636.0 M438.0 636.0 L439.7 638.0 L441.0 639.4 L442.5 641.0 L444.0 642.5 L445.5 644.0 L447.0 645.3 L448.9 647.0 L450.1 648.0 L452.0 649.5 L453.9 651.0 L455.4 652.0 L457.0 653.1 L459.0 654.3 L461.0 655.4 L463.0 656.4 L465.0 657.3 L467.0 658.0 L470.0 658.9 L470.4 659.0 M1899.0 436.5 L1897.0 437.5 L1895.0 438.6 L1893.0 439.7 L1891.0 440.9 L1889.1 442.0 L1887.5 443.0 L1885.9 444.0 L1884.0 445.2 L1882.0 446.5 L1880.0 447.7 L1878.0 448.9 M1878.0 509.2 L1881.0 509.2 L1884.0 509.3 L1887.0 509.4 L1890.0 509.4 L1893.0 509.5 L1896.0 509.5 L1899.0 509.5 M1357.4 659.0 L1358.0 656.9 L1358.8 654.0 L1359.5 652.0 L1360.1 650.0 L1361.0 647.3 L1361.8 645.0 L1362.5 643.0 L1363.3 641.0 L1364.0 639.0 L1365.0 636.3 M1244.9 636.0 L1244.7 639.0 L1244.6 642.0 L1244.6 645.0 L1244.5 648.0 L1244.5 651.0 L1244.4 654.0 L1244.4 657.0 L1244.4 659.0 M246.3 659.0 L247.0 656.8 L247.9 654.0 L248.6 652.0 L249.2 650.0 L250.0 647.8 L251.0 645.1 L251.8 643.0 L252.6 641.0 L253.3 639.0 L254.1 637.0 L254.5 636.0 M183.0 636.7 L184.0 638.5 L185.0 640.3 L186.0 642.0 L187.2 644.0 L188.3 646.0 L189.5 648.0 L190.6 650.0 L191.7 652.0 L192.8 654.0 L193.8 656.0 L194.8 658.0 L195.3 659.0 M373.9 659.0 L374.5 657.0 L375.0 655.0 L375.9 652.0 L376.4 650.0 L377.0 647.9 L377.8 645.0 L378.3 643.0 L379.0 640.4 L379.6 638.0 L380.0 636.3 M327.0 636.4 L328.2 638.0 L329.6 640.0 L331.0 642.0 L332.0 643.5 L333.0 645.1 L334.1 647.0 L335.2 649.0 L336.3 651.0 L337.3 653.0 L338.2 655.0 L339.1 657.0 L339.9 659.0 M1031.7 659.0 L1031.3 656.0 L1031.0 654.0 L1030.4 651.0 L1029.9 649.0 L1029.0 646.1 L1028.2 644.0 L1027.3 642.0 L1026.1 640.0 L1025.0 638.3 L1024.0 636.9 M934.0 636.3 L932.2 638.0 L931.0 639.2 L929.3 641.0 L928.0 642.4 L926.7 644.0 L925.2 646.0 L924.0 647.8 L923.0 649.4 L922.0 651.2 L921.0 653.2 L920.0 655.4 L919.0 657.9 L918.6 659.0 M1794.8 659.0 L1794.1 656.0 L1793.5 654.0 L1793.0 652.0 L1792.0 649.0 L1791.3 647.0 L1790.6 645.0 L1789.8 643.0 L1788.9 641.0 L1788.0 639.0 L1786.9 637.0 L1786.4 636.0 M1750.7 636.0 L1749.8 638.0 L1749.0 640.2 L1748.2 643.0 L1747.8 645.0 L1747.3 648.0 L1747.0 650.2 L1746.7 653.0 L1746.5 656.0 L1746.4 659.0 M175.0 636.8 L176.0 638.7 L177.0 640.6 L178.0 642.4 L179.0 644.1 L180.1 646.0 L181.2 648.0 L182.3 650.0 L183.4 652.0 L184.4 654.0 L185.4 656.0 L186.4 658.0 L186.9 659.0 M508.0 659.0 L510.0 657.1 L511.1 656.0 L513.0 654.0 L514.0 652.9 L515.7 651.0 L517.0 649.6 L518.4 648.0 L520.0 646.1 L521.0 644.9 L522.6 643.0 L524.0 641.2 L525.0 639.9 L526.4 638.0 L527.8 636.0 M1878.0 235.7 L1880.0 236.1 L1883.0 236.7 L1885.0 237.1 L1888.0 237.7 L1890.0 238.1 L1893.0 238.6 L1895.9 239.0 L1898.0 239.3 L1899.0 239.4 M1364.7 659.0 L1365.4 657.0 L1366.0 655.0 L1367.0 652.3 L1367.9 650.0 L1368.7 648.0 L1369.6 646.0 L1370.6 644.0 L1371.6 642.0 L1372.6 640.0 L1373.7 638.0 L1374.8 636.0 M1236.1 636.0 L1236.5 639.0 L1236.8 642.0 L1237.0 644.2 L1237.2 647.0 L1237.5 650.0 L1237.7 653.0 L1237.9 656.0 L1238.0 658.9 L1238.0 659.0 M1878.8 377.0 L1879.8 375.0 L1880.4 373.0 L1880.9 370.0 L1881.0 368.0 L1880.9 366.0 L1880.4 363.0 L1879.8 361.0 L1879.0 358.9 L1878.6 358.0 M1899.0 422.2 L1897.0 423.0 L1894.8 424.0 L1892.9 425.0 L1891.0 426.0 L1889.0 427.2 L1887.0 428.5 L1885.0 429.9 L1883.5 431.0 L1882.0 432.1 L1880.0 433.5 L1878.0 435.0 M1878.0 516.3 L1881.0 516.3 L1884.0 516.4 L1887.0 516.5 L1890.0 516.6 L1893.0 516.6 L1896.0 516.7 L1899.0 516.8 M619.4 651.0 L621.8 650.0 L623.5 649.0 L625.1 648.0 L627.0 646.5 L628.8 645.0 L630.0 643.8 L631.8 642.0 L633.0 640.6 L634.3 639.0 L635.7 637.0 L636.0 636.5 M601.2 636.0 L602.0 638.1 L603.0 640.4 L604.0 642.4 L605.0 644.0 L606.4 646.0 L608.0 647.8 L609.3 649.0 L611.0 650.2 L613.0 651.1 L616.0 651.6 L619.0 651.1 L619.4 651.0 M1801.7 659.0 L1801.2 656.0 L1800.8 654.0 L1800.2 651.0 L1799.8 649.0 L1799.1 646.0 L1798.6 644.0 L1798.0 641.5 L1797.4 639.0 L1796.8 637.0 L1796.6 636.0 M1738.4 636.0 L1738.1 639.0 L1738.0 642.0 L1738.0 645.0 L1738.1 648.0 L1738.2 651.0 L1738.3 654.0 L1738.4 657.0 L1738.5 659.0 M1040.5 659.0 L1040.4 656.0 L1040.3 653.0 L1040.2 650.0 L1040.0 647.8 L1039.7 645.0 L1039.3 642.0 L1038.8 640.0 L1038.0 637.0 L1038.0 636.9 M920.0 636.2 L918.8 638.0 L917.5 640.0 L916.4 642.0 L915.3 644.0 L914.4 646.0 L913.5 648.0 L912.8 650.0 L912.0 652.3 L911.2 655.0 L910.7 657.0 L910.2 659.0 M256.7 659.0 L257.4 657.0 L258.2 655.0 L259.0 653.0 L260.0 650.7 L261.0 648.7 L262.0 646.8 L263.0 645.0 L264.3 643.0 L265.7 641.0 L267.0 639.2 L268.0 638.0 L269.0 636.9 M299.0 636.6 L300.8 638.0 L302.0 639.1 L304.0 640.9 L305.1 642.0 L307.0 644.0 L308.0 645.1 L309.5 647.0 L311.0 649.0 L312.0 650.4 L313.0 652.0 L314.1 654.0 L315.2 656.0 L316.1 658.0 L316.6 659.0 M394.8 659.0 L395.4 657.0 L396.0 654.8 L396.9 652.0 L397.7 650.0 L398.5 648.0 L399.4 646.0 L400.4 644.0 L401.6 642.0 L403.0 640.1 L404.0 638.9 L406.0 637.1 L407.0 636.4 M418.0 636.5 L420.0 637.6 L422.0 638.9 L423.5 640.0 L425.0 641.2 L427.0 642.9 L428.2 644.0 L430.0 645.7 L431.4 647.0 L433.0 648.6 L434.4 650.0 L436.0 651.7 L437.3 653.0 L439.0 654.8 L440.2 656.0 L442.0 657.8 L443.2 659.0 M166.0 636.6 L167.0 638.6 L168.0 640.4 L169.0 642.2 L170.0 644.0 L171.2 646.0 L172.3 648.0 L173.5 650.0 L174.6 652.0 L175.7 654.0 L176.7 656.0 L177.7 658.0 L178.2 659.0 M1899.0 366.2 L1898.0 364.5 L1897.0 362.9 L1895.7 361.0 L1894.3 359.0 L1893.0 357.4 L1891.9 356.0 L1890.3 354.0 L1889.0 352.5 L1887.7 351.0 L1886.0 349.1 L1885.0 348.0 L1883.2 346.0 L1882.0 344.7 L1880.4 343.0 L1879.0 341.6 L1878.5 341.0 M1878.0 244.8 L1881.0 244.7 L1884.0 244.7 L1887.0 244.9 L1890.0 245.0 L1892.0 245.1 L1895.0 245.3 L1898.0 245.5 L1899.0 245.5 M1372.8 659.0 L1373.6 657.0 L1374.5 655.0 L1375.4 653.0 L1376.5 651.0 L1377.7 649.0 L1379.0 647.0 L1380.0 645.6 L1381.3 644.0 L1383.0 642.1 L1384.1 641.0 L1386.0 639.3 L1387.7 638.0 L1389.3 637.0 L1390.0 636.6 M1413.0 636.8 L1415.0 637.4 L1417.0 638.1 L1419.5 639.0 L1422.0 639.9 L1424.0 640.6 L1426.0 641.2 L1428.5 642.0 L1431.0 642.7 L1433.0 643.2 L1436.0 643.9 L1438.0 644.2 L1441.0 644.5 L1444.0 644.6 L1447.0 644.5 L1450.0 644.1 L1452.0 643.8 L1455.0 643.1 L1457.0 642.5 L1459.0 641.9 L1461.8 641.0 L1464.0 640.3 L1466.0 639.7 L1468.3 639.0 L1471.0 638.3 L1473.0 637.8 L1476.0 637.3 L1478.4 637.0 L1479.0 636.9 M1490.0 637.0 L1492.0 637.2 L1495.0 637.6 L1497.5 638.0 L1500.0 638.5 L1502.8 639.0 L1505.0 639.5 L1507.6 640.0 L1510.0 640.5 L1512.4 641.0 L1515.0 641.5 L1517.6 642.0 L1520.0 642.4 L1523.0 642.8 L1525.0 643.0 L1528.0 643.3 L1531.0 643.4 L1534.0 643.3 L1537.0 643.1 L1539.0 642.8 L1542.0 642.1 L1544.0 641.6 L1546.0 640.9 L1548.2 640.0 L1550.2 639.0 L1552.0 638.0 L1554.0 636.8 M1878.0 522.7 L1881.0 522.8 L1884.0 522.8 L1887.0 523.0 L1889.0 523.0 L1892.0 523.2 L1895.0 523.3 L1898.0 523.4 L1899.0 523.5 M0.0 468.6 L1.0 468.6 L2.0 468.7 L3.0 468.8 L4.0 468.9 M4.0 364.2 L3.0 364.7 L2.0 365.0 L2.0 365.0 L1.0 365.2 L0.0 365.3 M631.2 659.0 L632.9 657.0 L634.0 655.6 L635.2 654.0 L636.7 652.0 L638.0 650.3 L639.0 649.0 L640.4 647.0 L641.9 645.0 L643.0 643.3 L644.0 641.8 L645.0 640.0 L646.1 638.0 L647.0 636.2 M903.0 636.0 L903.1 639.0 L903.0 641.0 L902.8 644.0 L902.5 647.0 L902.2 650.0 L902.0 652.2 L901.7 655.0 L901.5 658.0 L901.4 659.0 M1049.7 659.0 L1049.9 656.0 L1050.1 654.0 L1050.3 651.0 L1050.6 648.0 L1051.0 645.0 L1051.2 643.0 L1051.5 640.0 L1051.8 637.0 L1051.9 636.0 M1223.0 636.2 L1224.4 638.0 L1225.6 640.0 L1226.6 642.0 L1227.4 644.0 L1228.1 646.0 L1229.0 649.0 L1229.5 651.0 L1230.0 653.5 L1230.4 656.0 L1230.9 659.0 M0.0 397.4 L1.0 397.4 L2.0 397.6 L3.0 397.8 L3.8 398.0 M4.0 426.9 L3.0 427.0 L2.0 427.0 L1.0 427.0 L0.5 427.0 L0.0 427.0 M518.2 659.0 L519.7 657.0 L521.0 655.2 L522.0 653.8 L523.3 652.0 L524.8 650.0 L526.0 648.3 L527.0 647.0 L528.4 645.0 L529.9 643.0 L531.0 641.4 L532.0 640.0 L533.3 638.0 L534.7 636.0 M591.0 636.7 L591.6 639.0 L592.2 641.0 L593.0 643.6 L593.8 646.0 L594.5 648.0 L595.2 650.0 L596.0 652.1 L597.0 654.7 L597.9 657.0 L598.7 659.0 M1807.6 659.0 L1807.2 656.0 L1806.9 654.0 L1806.5 651.0 L1806.1 648.0 L1805.7 646.0 L1805.3 643.0 L1805.0 641.0 L1804.5 638.0 L1804.3 636.0 M1728.7 636.0 L1729.0 638.8 L1729.3 641.0 L1729.8 644.0 L1730.1 646.0 L1730.5 649.0 L1730.9 652.0 L1731.2 654.0 L1731.6 657.0 L1731.8 659.0 M118.5 659.0 L117.8 657.0 L117.0 654.7 L116.0 652.1 L115.1 650.0 L114.2 648.0 L113.3 646.0 L112.3 644.0 L111.2 642.0 L110.1 640.0 L109.0 638.2 L108.0 636.6 M83.7 636.0 L84.0 638.1 L84.6 641.0 L85.0 643.0 L85.8 646.0 L86.4 648.0 L87.0 650.4 L87.7 653.0 L88.2 655.0 L88.9 658.0 L89.1 659.0 M270.9 659.0 L272.0 657.6 L273.6 656.0 L275.0 654.8 L277.0 653.5 L279.0 652.6 L282.0 652.0 L283.2 652.0 L286.0 652.4 L288.0 653.1 L290.0 654.1 L292.0 655.4 L293.9 657.0 L295.0 658.1 L295.8 659.0 M0.0 224.8 L1.0 224.8 L2.0 224.9 L2.4 225.0 L3.0 225.1 L4.0 225.4 M4.0 348.6 L3.0 348.9 L2.7 349.0 L2.0 349.2 L1.0 349.3 L0.0 349.3 M1899.0 348.3 L1897.2 347.0 L1895.9 346.0 L1894.0 344.6 L1892.0 343.0 L1890.8 342.0 L1889.0 340.5 L1887.2 339.0 L1886.0 337.9 L1884.0 336.1 L1882.8 335.0 L1881.0 333.4 L1879.5 332.0 L1878.4 331.0 M1878.0 252.8 L1881.0 252.2 L1883.0 251.9 L1886.0 251.6 L1889.0 251.4 L1892.0 251.3 L1895.0 251.2 L1898.0 251.2 L1899.0 251.2 M0.0 484.5 L1.0 484.6 L2.0 484.6 L3.0 484.8 L4.0 484.9 M153.0 636.8 L154.0 638.7 L155.0 640.5 L156.0 642.1 L157.2 644.0 L158.5 646.0 L159.9 648.0 L161.0 649.7 L162.0 651.2 L163.2 653.0 L164.5 655.0 L165.8 657.0 L167.0 659.0 M1382.6 659.0 L1383.9 657.0 L1385.0 655.5 L1386.3 654.0 L1388.0 652.3 L1389.5 651.0 L1391.0 649.9 L1393.0 648.8 L1395.0 647.9 L1398.0 647.0 L1400.0 646.7 L1403.0 646.5 L1406.0 646.7 L1408.5 647.0 L1411.0 647.5 L1413.1 648.0 L1416.0 648.8 L1418.0 649.5 L1420.0 650.2 L1422.2 651.0 L1424.7 652.0 L1427.0 652.9 L1429.0 653.7 L1431.0 654.5 L1433.0 655.2 L1435.1 656.0 L1438.0 656.9 L1440.0 657.4 L1442.8 658.0 L1445.0 658.3 L1448.0 658.3 L1451.0 658.1 L1453.0 657.7 L1455.5 657.0 L1458.0 656.1 L1460.0 655.3 L1462.0 654.4 L1464.0 653.4 L1466.0 652.5 L1468.0 651.6 L1470.0 650.7 L1472.0 649.9 L1474.4 649.0 L1477.0 648.2 L1479.0 647.7 L1482.0 647.2 L1484.0 646.9 L1487.0 646.7 L1490.0 646.7 L1493.0 646.9 L1495.0 647.1 L1498.0 647.6 L1500.4 648.0 L1503.0 648.6 L1505.0 649.1 L1508.0 649.9 L1510.0 650.4 L1512.0 651.0 L1515.0 652.0 L1517.0 652.6 L1519.0 653.2 L1521.4 654.0 L1524.0 654.8 L1526.0 655.4 L1528.0 656.0 L1531.0 656.8 L1533.0 657.2 L1536.0 657.8 L1538.0 658.0 L1541.0 658.2 L1544.0 658.1 L1546.0 657.8 L1549.0 657.1 L1551.0 656.4 L1553.0 655.4 L1555.0 654.3 L1556.9 653.0 L1558.3 652.0 L1560.0 650.6 L1561.8 649.0 L1563.0 647.8 L1564.8 646.0 L1566.0 644.8 L1567.6 643.0 L1569.0 641.5 L1570.3 640.0 L1571.9 638.0 L1573.0 636.7 M1878.0 529.0 L1880.0 529.0 L1883.0 529.1 L1886.0 529.2 L1889.0 529.4 L1892.0 529.6 L1895.0 529.8 L1897.9 530.0 L1899.0 530.1 M643.6 659.0 L644.9 657.0 L646.0 655.3 L647.0 653.7 L648.1 652.0 L649.4 650.0 L650.7 648.0 L651.9 646.0 L653.0 644.1 L654.0 642.3 L655.0 640.4 L656.0 638.2 L656.9 636.0 M875.0 636.8 L877.0 637.5 L879.0 638.3 L881.0 639.4 L883.0 640.7 L884.6 642.0 L886.0 643.5 L887.2 645.0 L888.3 647.0 L889.2 649.0 L890.0 651.3 L890.7 654.0 L891.1 656.0 L891.5 659.0 M0.0 606.0 L1.0 605.9 L2.0 605.8 L3.0 605.5 L4.0 605.2 M4.0 550.8 L3.0 550.5 L2.0 550.3 L1.0 550.1 L0.0 550.1 M1813.2 659.0 L1812.9 657.0 L1812.6 654.0 L1812.3 651.0 L1812.0 648.0 L1811.8 646.0 L1811.5 643.0 L1811.3 640.0 L1811.1 637.0 L1811.1 636.0 M1720.0 636.0 L1720.9 639.0 L1721.5 641.0 L1722.1 643.0 L1722.9 646.0 L1723.4 648.0 L1724.0 650.4 L1724.6 653.0 L1725.0 655.1 L1725.5 658.0 L1725.7 659.0 M1059.8 659.0 L1060.2 657.0 L1060.7 654.0 L1061.1 652.0 L1061.8 649.0 L1062.3 647.0 L1063.0 644.3 L1063.7 642.0 L1064.3 640.0 L1065.0 637.9 L1065.7 636.0 M1186.0 636.8 L1188.0 637.4 L1190.1 638.0 L1193.0 638.8 L1195.0 639.2 L1198.0 639.9 L1200.0 640.4 L1202.7 641.0 L1205.0 641.6 L1207.0 642.3 L1209.0 643.0 L1211.1 644.0 L1213.0 645.2 L1215.0 646.7 L1216.4 648.0 L1218.0 650.0 L1219.0 651.5 L1220.0 653.3 L1221.0 655.5 L1221.9 658.0 L1222.3 659.0 M526.9 659.0 L528.0 657.3 L529.0 655.7 L530.1 654.0 L531.4 652.0 L532.7 650.0 L534.0 648.1 L535.0 646.7 L536.2 645.0 L537.6 643.0 L539.0 641.0 L540.0 639.6 L541.1 638.0 L542.0 636.7 M581.1 636.0 L582.0 638.9 L582.7 641.0 L583.3 643.0 L584.0 645.1 L584.9 648.0 L585.5 650.0 L586.1 652.0 L587.0 655.0 L587.5 657.0 L588.1 659.0 M136.5 659.0 L136.0 656.2 L135.6 654.0 L135.0 651.1 L134.5 649.0 L133.9 647.0 L133.0 644.1 L132.2 642.0 L131.4 640.0 L130.6 638.0 L130.0 636.7 M66.1 636.0 L67.0 638.4 L68.0 641.0 L68.7 643.0 L69.5 645.0 L70.3 647.0 L71.1 649.0 L72.0 651.6 L72.9 654.0 L73.5 656.0 L74.2 658.0 L74.5 659.0 M0.0 233.9 L1.0 234.0 L1.1 234.0 L2.0 234.1 L3.0 234.3 L4.0 234.6 M4.0 337.2 L3.0 337.5 L2.0 337.8 L1.0 337.9 L0.0 337.9 M1899.0 338.6 L1897.0 337.3 L1895.0 336.0 L1893.6 335.0 L1892.0 333.9 L1890.0 332.4 L1888.2 331.0 L1887.0 330.0 L1885.0 328.3 L1883.5 327.0 L1882.0 325.6 L1880.3 324.0 L1879.0 322.8 L1878.2 322.0 M1878.0 260.8 L1880.0 260.0 L1883.0 259.0 L1885.0 258.5 L1887.3 258.0 L1890.0 257.5 L1893.0 257.2 L1895.0 257.0 L1898.0 256.7 L1899.0 256.6 M655.9 659.0 L657.0 657.3 L658.0 655.7 L659.1 654.0 L660.3 652.0 L661.5 650.0 L662.6 648.0 L663.7 646.0 L664.7 644.0 L665.6 642.0 L666.4 640.0 L667.1 638.0 L667.6 636.0 M790.0 636.6 L792.0 637.8 L794.0 639.0 L796.0 640.0 L798.0 640.9 L800.0 641.8 L802.0 642.5 L804.0 643.2 L807.0 644.0 L809.0 644.4 L812.0 645.0 L814.0 645.2 L817.0 645.5 L820.0 645.7 L823.0 645.7 L826.0 645.7 L829.0 645.6 L832.0 645.5 L835.0 645.4 L838.0 645.3 L841.0 645.3 L844.0 645.3 L847.0 645.3 L850.0 645.5 L853.0 645.7 L855.6 646.0 L858.0 646.4 L861.0 646.9 L863.0 647.4 L865.0 648.1 L867.5 649.0 L869.6 650.0 L871.3 651.0 L873.0 652.2 L875.0 654.0 L876.0 655.1 L877.4 657.0 L878.7 659.0 M1818.5 659.0 L1818.3 656.0 L1818.1 653.0 L1818.0 651.0 L1817.8 648.0 L1817.6 645.0 L1817.5 642.0 L1817.5 639.0 L1817.6 636.0 M1878.0 535.5 L1881.0 535.5 L1884.0 535.6 L1887.0 535.8 L1889.7 536.0 L1892.0 536.2 L1895.0 536.5 L1898.0 536.8 L1899.0 536.9 M1574.2 659.0 L1575.2 657.0 L1576.1 655.0 L1577.1 653.0 L1578.1 651.0 L1579.2 649.0 L1580.3 647.0 L1581.5 645.0 L1582.7 643.0 L1583.9 641.0 L1585.0 639.3 L1586.0 637.8 L1587.0 636.3 M1712.0 636.2 L1713.0 638.4 L1714.0 640.6 L1715.0 643.0 L1715.8 645.0 L1716.5 647.0 L1717.2 649.0 L1718.0 651.4 L1718.7 654.0 L1719.3 656.0 L1720.0 659.0 M1072.1 659.0 L1072.8 656.0 L1073.3 654.0 L1074.0 651.3 L1074.6 649.0 L1075.3 647.0 L1076.0 644.7 L1076.9 642.0 L1077.7 640.0 L1078.4 638.0 L1079.0 636.5 M1168.0 636.7 L1170.0 638.0 L1171.7 639.0 L1173.4 640.0 L1175.2 641.0 L1177.1 642.0 L1179.1 643.0 L1181.3 644.0 L1183.6 645.0 L1186.0 646.0 L1188.0 646.7 L1190.0 647.5 L1192.0 648.2 L1194.0 649.0 L1196.6 650.0 L1198.9 651.0 L1201.0 652.0 L1202.9 653.0 L1204.5 654.0 L1206.0 655.1 L1208.0 656.8 L1209.2 658.0 L1210.1 659.0 M0.0 626.4 L1.0 626.4 L2.0 626.3 L3.0 626.1 L3.4 626.0 L4.0 625.8 M51.0 636.4 L52.0 638.3 L53.0 640.2 L54.0 642.1 L55.0 644.0 L56.0 646.0 L57.0 648.0 L58.0 650.1 L59.0 652.3 L60.0 654.6 L61.0 657.0 L61.8 659.0 M535.8 659.0 L537.0 657.1 L538.0 655.5 L539.0 654.0 L540.4 652.0 L541.8 650.0 L543.0 648.4 L544.1 647.0 L545.8 645.0 L547.0 643.7 L548.6 642.0 L550.0 640.6 L551.7 639.0 L553.0 637.9 L555.0 636.4 M567.0 636.2 L568.8 638.0 L570.0 639.5 L571.0 641.0 L572.2 643.0 L573.3 645.0 L574.3 647.0 L575.1 649.0 L576.0 651.2 L577.0 654.0 L577.6 656.0 L578.3 658.0 L578.5 659.0 M0.0 243.0 L1.0 243.1 L2.0 243.2 L3.0 243.5 L4.0 243.8 M4.0 326.6 L3.0 326.9 L2.6 327.0 L2.0 327.2 L1.0 327.3 L0.0 327.4 M1899.0 330.5 L1897.0 329.3 L1895.0 328.0 L1893.6 327.0 L1892.0 325.9 L1890.0 324.4 L1888.3 323.0 L1887.0 321.8 L1885.0 320.0 L1884.0 319.0 L1882.0 317.0 L1881.0 315.9 L1879.3 314.0 L1878.4 313.0 M1878.8 269.0 L1880.4 268.0 L1882.1 267.0 L1884.2 266.0 L1886.6 265.0 L1889.0 264.2 L1891.0 263.7 L1894.0 263.0 L1896.0 262.7 L1899.0 262.2 M676.2 659.0 L677.2 657.0 L678.0 655.0 L679.0 652.3 L679.7 650.0 L680.1 648.0 L680.7 645.0 L681.0 643.0 L681.4 640.0 L681.6 637.0 L681.6 636.0 M776.0 636.5 L777.6 638.0 L779.0 639.3 L780.9 641.0 L782.1 642.0 L784.0 643.6 L785.8 645.0 L787.1 646.0 L789.0 647.5 L791.0 648.9 L792.6 650.0 L794.0 651.0 L796.0 652.3 L798.0 653.5 L800.0 654.6 L802.0 655.7 L804.0 656.7 L806.0 657.5 L808.0 658.3 L810.1 659.0 M1824.1 659.0 L1824.0 657.0 L1823.8 654.0 L1823.7 651.0 L1823.7 648.0 L1823.7 645.0 L1823.7 642.0 L1823.9 639.0 L1824.1 637.0 L1824.2 636.0 M1878.0 542.7 L1881.0 542.6 L1884.0 542.7 L1887.0 543.0 L1889.0 543.1 L1892.0 543.5 L1895.0 543.9 L1897.0 544.1 L1899.0 544.4 M1586.9 659.0 L1587.6 657.0 L1588.3 655.0 L1589.1 653.0 L1590.0 650.8 L1591.0 648.6 L1592.0 646.6 L1593.0 644.7 L1594.0 642.9 L1595.1 641.0 L1596.4 639.0 L1597.7 637.0 L1598.0 636.5 M1704.0 636.1 L1705.2 638.0 L1706.5 640.0 L1707.6 642.0 L1708.7 644.0 L1709.7 646.0 L1710.6 648.0 L1711.4 650.0 L1712.2 652.0 L1713.0 654.3 L1713.9 657.0 L1714.5 659.0 M1089.3 659.0 L1089.6 656.0 L1090.0 653.0 L1090.3 651.0 L1090.8 648.0 L1091.2 646.0 L1091.9 643.0 L1092.4 641.0 L1093.0 638.7 L1093.8 636.0 M1154.0 636.5 L1155.8 638.0 L1157.1 639.0 L1159.0 640.5 L1161.0 642.0 L1162.4 643.0 L1164.0 644.1 L1166.0 645.5 L1168.0 646.8 L1169.8 648.0 L1171.4 649.0 L1173.0 650.0 L1175.0 651.3 L1177.0 652.4 L1179.0 653.6 L1181.0 654.7 L1183.0 655.8 L1185.0 656.9 L1187.0 658.0 L1188.8 659.0 M24.7 659.0 L25.6 657.0 L27.0 655.0 L28.1 654.0 L30.6 653.0 L32.5 653.0 L35.0 653.8 L37.0 654.9 L38.4 656.0 L40.0 657.5 L41.4 659.0 M548.1 659.0 L550.0 657.2 L551.5 656.0 L553.0 655.0 L555.1 654.0 L558.0 653.5 L560.4 654.0 L562.3 655.0 L564.0 656.5 L565.3 658.0 L566.0 659.0 M0.0 252.9 L1.0 253.0 L1.2 253.0 L2.0 253.1 L3.0 253.4 L4.0 253.8 M4.0 315.3 L3.0 315.7 L2.0 316.0 L2.0 316.0 L1.0 316.2 L0.0 316.2 M1899.0 322.8 L1897.0 321.5 L1895.0 320.1 L1893.5 319.0 L1892.0 317.8 L1890.0 316.1 L1888.9 315.0 L1887.0 313.1 L1886.0 312.0 L1884.4 310.0 L1883.0 308.2 L1882.0 306.7 L1880.9 305.0 L1879.8 303.0 L1878.9 301.0 M1879.0 281.0 L1880.0 279.3 L1881.0 278.0 L1882.8 276.0 L1884.0 274.9 L1886.0 273.4 L1888.0 272.2 L1890.0 271.1 L1892.0 270.3 L1894.0 269.6 L1896.0 269.0 L1899.0 268.2 M1830.0 659.0 L1830.0 656.8 L1830.0 654.0 L1830.0 651.0 L1830.0 649.0 L1830.2 646.0 L1830.4 643.0 L1830.8 640.0 L1831.1 638.0 L1831.5 636.0 M1878.0 551.6 L1881.0 551.4 L1884.0 551.4 L1887.0 551.6 L1890.0 551.9 L1892.0 552.2 L1895.0 552.7 L1897.0 553.1 L1899.0 553.5 M706.1 659.0 L705.6 657.0 L705.0 654.6 L704.3 652.0 L703.8 650.0 L703.0 647.0 L702.5 645.0 L701.9 643.0 L701.2 640.0 L700.7 638.0 L700.3 636.0 M765.0 636.9 L766.0 638.0 L767.9 640.0 L769.0 641.2 L770.7 643.0 L772.0 644.3 L773.6 646.0 L775.0 647.4 L776.5 649.0 L778.0 650.5 L779.4 652.0 L781.0 653.7 L782.3 655.0 L784.0 656.8 L785.1 658.0 L786.1 659.0 M1596.4 659.0 L1597.0 657.0 L1598.0 654.4 L1598.9 652.0 L1599.8 650.0 L1600.8 648.0 L1601.9 646.0 L1603.0 644.0 L1604.0 642.4 L1605.0 640.8 L1606.3 639.0 L1607.7 637.0 L1608.0 636.7 M1696.0 636.2 L1697.5 638.0 L1699.0 639.8 L1700.0 641.2 L1701.3 643.0 L1702.6 645.0 L1703.8 647.0 L1704.9 649.0 L1705.9 651.0 L1706.7 653.0 L1707.6 655.0 L1708.3 657.0 L1709.0 659.0 M1114.2 659.0 L1113.8 657.0 L1113.4 654.0 L1113.1 651.0 L1113.1 648.0 L1113.2 645.0 L1113.7 642.0 L1114.3 640.0 L1115.3 638.0 L1116.0 636.9 M1134.0 636.7 L1136.0 637.9 L1137.7 639.0 L1139.2 640.0 L1141.0 641.2 L1143.0 642.6 L1145.0 644.0 L1146.4 645.0 L1148.0 646.2 L1150.0 647.7 L1151.8 649.0 L1153.1 650.0 L1155.0 651.4 L1157.0 652.9 L1158.4 654.0 L1160.0 655.2 L1162.0 656.8 L1163.6 658.0 L1165.0 659.0 M0.0 265.7 L1.0 265.8 L1.8 266.0 L2.0 266.0 L3.0 266.5 L3.9 267.0 M4.0 301.0 L3.0 301.6 L2.0 302.0 L2.0 302.0 L1.0 302.3 L0.0 302.4 M1899.0 314.6 L1897.0 313.0 L1895.8 312.0 L1894.0 310.3 L1892.8 309.0 L1891.1 307.0 L1890.0 305.6 L1889.0 304.0 L1887.8 302.0 L1886.9 300.0 L1886.0 297.2 L1885.5 295.0 L1885.3 292.0 L1885.6 289.0 L1886.2 287.0 L1887.0 285.0 L1888.2 283.0 L1889.8 281.0 L1891.0 279.9 L1893.0 278.4 L1895.0 277.1 L1897.0 276.1 L1899.0 275.3 M1837.1 659.0 L1837.1 656.0 L1837.2 653.0 L1837.5 650.0 L1837.8 647.0 L1838.1 645.0 L1838.7 642.0 L1839.2 640.0 L1840.0 637.4 L1840.5 636.0 M1878.0 566.6 L1880.0 565.7 L1882.7 565.0 L1885.0 564.8 L1888.0 564.9 L1890.0 565.2 L1893.0 565.8 L1895.0 566.4 L1897.0 567.0 L1899.0 567.7 M1899.0 608.3 L1897.7 610.0 L1896.3 612.0 L1895.2 614.0 L1894.4 616.0 L1893.8 618.0 L1893.3 621.0 L1893.1 624.0 L1893.3 627.0 L1893.7 630.0 L1894.1 632.0 L1895.0 635.0 L1895.6 637.0 L1896.4 639.0 L1897.2 641.0 L1898.2 643.0 L1899.0 644.5 M1604.6 659.0 L1605.3 657.0 L1606.1 655.0 L1607.0 652.8 L1608.0 650.7 L1609.0 648.8 L1610.0 647.0 L1611.3 645.0 L1612.7 643.0 L1614.0 641.3 L1615.0 640.0 L1616.8 638.0 L1618.0 636.7 M1688.0 636.9 L1689.3 638.0 L1691.0 639.6 L1692.3 641.0 L1694.0 642.8 L1695.0 644.0 L1696.5 646.0 L1697.9 648.0 L1699.0 649.7 L1700.0 651.4 L1701.0 653.3 L1702.0 655.3 L1703.0 657.6 L1703.6 659.0 M721.7 659.0 L721.4 656.0 L721.1 653.0 L720.9 651.0 L720.6 648.0 L720.4 645.0 L720.2 642.0 L720.1 639.0 L720.2 636.0 M751.0 636.6 L752.5 638.0 L754.0 639.4 L755.6 641.0 L757.0 642.3 L758.6 644.0 L760.0 645.4 L761.5 647.0 L763.0 648.6 L764.3 650.0 L766.0 652.0 L767.0 653.1 L768.5 655.0 L770.0 656.8 L771.0 658.1 L771.7 659.0 M1899.0 303.0 L1897.8 301.0 L1896.9 299.0 L1896.0 296.0 L1895.9 294.0 L1896.0 292.0 L1897.0 289.0 L1898.0 287.3 L1899.0 286.0 M1612.2 659.0 L1613.0 657.0 L1614.0 654.9 L1615.0 652.9 L1616.1 651.0 L1617.3 649.0 L1618.7 647.0 L1620.0 645.3 L1621.1 644.0 L1623.0 642.0 L1624.1 641.0 L1626.0 639.3 L1627.6 638.0 L1629.0 637.0 M1677.0 636.4 L1679.0 637.6 L1681.0 638.9 L1682.5 640.0 L1684.0 641.1 L1686.0 642.8 L1687.4 644.0 L1689.0 645.6 L1690.3 647.0 L1691.9 649.0 L1693.0 650.4 L1694.1 652.0 L1695.3 654.0 L1696.5 656.0 L1697.5 658.0 L1698.0 659.0 M1847.1 659.0 L1847.5 656.0 L1847.9 653.0 L1848.4 651.0 L1849.0 648.8 L1850.0 646.1 L1851.0 644.1 L1852.0 642.4 L1853.0 641.0 L1855.0 639.0 L1856.2 638.0 L1858.0 636.9 M1867.0 636.6 L1869.0 637.9 L1870.2 639.0 L1871.9 641.0 L1873.0 642.5 L1874.0 644.1 L1875.0 646.0 L1876.0 648.0 L1877.0 650.2 L1878.0 652.7 L1878.8 655.0 L1879.5 657.0 L1880.2 659.0 M741.7 659.0 L743.0 657.8 L745.1 657.0 L747.1 657.0 L750.0 657.9 L752.0 659.0 L752.0 659.0 M1619.8 659.0 L1620.8 657.0 L1621.9 655.0 L1623.0 653.3 L1624.0 651.8 L1625.4 650.0 L1627.0 648.1 L1628.1 647.0 L1630.0 645.3 L1631.6 644.0 L1633.0 643.0 L1635.0 641.7 L1637.0 640.6 L1639.0 639.7 L1641.0 638.9 L1643.8 638.0 L1646.0 637.5 L1648.7 637.0 L1649.0 637.0 M1659.0 637.0 L1661.0 637.3 L1664.0 637.9 L1666.0 638.4 L1668.0 639.1 L1670.5 640.0 L1672.8 641.0 L1674.8 642.0 L1676.6 643.0 L1678.2 644.0 L1680.0 645.2 L1682.0 646.8 L1683.4 648.0 L1685.0 649.5 L1686.4 651.0 L1688.0 653.0 L1689.0 654.3 L1690.2 656.0 L1691.4 658.0 L1692.0 659.0 M1627.9 659.0 L1629.0 657.3 L1630.0 655.9 L1631.5 654.0 L1633.0 652.4 L1634.5 651.0 L1636.0 649.7 L1638.0 648.3 L1640.0 647.1 L1642.0 646.1 L1644.0 645.3 L1646.0 644.7 L1648.7 644.0 L1651.0 643.6 L1654.0 643.4 L1657.0 643.4 L1660.0 643.6 L1662.2 644.0 L1665.0 644.6 L1667.0 645.2 L1669.1 646.0 L1671.3 647.0 L1673.3 648.0 L1675.0 649.0 L1677.0 650.4 L1679.0 652.0 L1680.1 653.0 L1682.0 654.9 L1683.0 656.0 L1684.6 658.0 L1685.3 659.0" fill="none" stroke="#fff" stroke-opacity=".04" stroke-width="1.1"/></svg>
<div class="abs card1"></div>
<div class="abs icon"><svg width="32" height="32" viewBox="0 0 32 32"><path d="M7.3 20.4 V16.9 A8.7 8.7 0 0 1 24.7 16.9 V20.4 M6.3 20.4 H10.5 M25.7 20.4 H21.5" fill="none" stroke="#fff" stroke-width="2.1"/><rect x="9.7" y="15.9" width="3.1" height="9" rx="1.5" fill="#fff"/><rect x="19.2" y="15.9" width="3.1" height="9" rx="1.5" fill="#fff"/></svg></div>
<div class="abs title1">Guest Orders Account Link</div>
<div class="abs" style="left:1878px;top:28px;width:11px;height:33px;border-radius:5px 0 0 5px;background:rgba(255,255,255,.32);border-left:2px solid #fff;box-shadow:-1px 0 1px rgba(0,0,0,.12)"></div>
<div class="abs" style="left:1882px;top:32px;width:8px;height:25px;background:#2d6ba0"></div>
<div class="abs card2"></div>
<div class="abs title2">Link Guest Orders to Account record</div>
<div class="abs hdrline"></div>
<div class="abs bar" style="top:133px;height:56px"></div>
<div class="abs btn cancel" style="left:871px;top:145px">Cancel</div><div class="abs btn save" style="left:951px;top:145px">Save</div>
<div class="abs thead">
<div class="abs thsep" style="left:92px"></div>
<div class="abs th" style="left:98px;transform:scaleX(0.925)">Order Id</div>
<div class="abs thsep" style="left:283px"></div>
<div class="abs th" style="left:289px;transform:scaleX(0.938)">Order Number</div>
<div class="abs thsep" style="left:452px"></div>
<div class="abs th" style="left:458px;transform:scaleX(0.922)">*Suggested Account</div>
<div class="abs thsep" style="left:872px"></div>
<div class="abs th" style="left:878px;transform:scaleX(0.88)">Email</div>
<div class="abs thsep" style="left:1122px"></div>
<div class="abs th" style="left:1128px;transform:scaleX(0.9)">Guest First Name</div>
<div class="abs thsep" style="left:1373px"></div>
<div class="abs th" style="left:1379px;transform:scaleX(0.897)">Guest Last Name</div>
<div class="abs thsep" style="left:1624px"></div>
<div class="abs th" style="left:1630px;transform:scaleX(0.92)">Order Date</div>
<div class="abs thsep" style="left:46px"></div>
<svg class="abs" style="left:1702px;top:10px" width="10" height="11" viewBox="0 0 10 11"><path d="M5 1.2 V10.5 M1.2 5 L5 1.2 L8.8 5" fill="none" stroke="#fff" stroke-width="1.9"/></svg>
<div class="abs" style="left:62px;top:6px;width:16px;height:16px;background:#fff;border-radius:2px;border:1px solid #747474"><div class="abs" style="left:3px;top:6px;width:8px;height:2px;background:#0176d3"></div></div>
</div>
<div class="abs row sel" style="top:217px;height:27px">
<div class="abs td num" style="left:0px;top:7px">1</div>
<div class="abs cb" style="left:62px;top:5px"><svg class="abs" style="left:2px;top:3px" width="10" height="9" viewBox="0 0 10 9"><path d="M1.2 5.2 L4 7.6 L8.8 1.6" fill="none" stroke="#0176d3" stroke-width="1.9"/></svg></div>
<div class="abs td lnk" style="left:98px;top:7px;transform:scaleX(0.991);transform-origin:0 0">a1OOt000000G9LtMAK</div>
<div class="abs td" style="left:288px;top:7px">Order 0000051</div>
<div class="abs td lnk" style="left:458px;top:7px;transform:scaleX(1.0084);transform-origin:0 0"><span class="ul">Curtis Banks (demo+cb@nimbleuser.com)</span></div>
<div class="abs td" style="left:877px;top:7px;transform:scaleX(1.0014);transform-origin:0 0">curtis.banks@gmail.com</div>
<div class="abs td" style="left:1128px;top:7px;transform:scaleX(1);transform-origin:0 0">Curtis</div>
<div class="abs td" style="left:1379px;top:7px;transform:scaleX(0.92);transform-origin:0 0">Banks</div>
<div class="abs td" style="left:1630px;top:7px;transform:scaleX(1.03);transform-origin:0 0">04/15/2024</div>
</div>
<div class="abs row sel" style="top:244px;height:27px">
<div class="abs td num" style="left:0px;top:7px">2</div>
<div class="abs cb" style="left:62px;top:5px"><svg class="abs" style="left:2px;top:3px" width="10" height="9" viewBox="0 0 10 9"><path d="M1.2 5.2 L4 7.6 L8.8 1.6" fill="none" stroke="#0176d3" stroke-width="1.9"/></svg></div>
<div class="abs td lnk" style="left:98px;top:7px;transform:scaleX(0.9871);transform-origin:0 0">a1OOt000000G9P7MAK</div>
<div class="abs td" style="left:288px;top:7px">Order 0000052</div>
<div class="abs td lnk" style="left:458px;top:7px;transform:scaleX(0.9865);transform-origin:0 0"><span class="ul">John Watson</span></div>
<div class="abs td" style="left:877px;top:7px;transform:scaleX(1.0154);transform-origin:0 0">jwatson@yahoo.com</div>
<div class="abs td" style="left:1128px;top:7px;transform:scaleX(1);transform-origin:0 0">John</div>
<div class="abs td" style="left:1379px;top:7px;transform:scaleX(1);transform-origin:0 0">Watson</div>
<div class="abs td" style="left:1630px;top:7px;transform:scaleX(1.03);transform-origin:0 0">04/15/2024</div>
</div>
<div class="abs row sel" style="top:271px;height:27px">
<div class="abs td num" style="left:0px;top:7px">3</div>
<div class="abs cb" style="left:62px;top:5px"><svg class="abs" style="left:2px;top:3px" width="10" height="9" viewBox="0 0 10 9"><path d="M1.2 5.2 L4 7.6 L8.8 1.6" fill="none" stroke="#0176d3" stroke-width="1.9"/></svg></div>
<div class="abs td lnk" style="left:98px;top:7px;transform:scaleX(0.9831);transform-origin:0 0">a1OOt000000GZOPMA4</div>
<div class="abs td" style="left:288px;top:7px">Order 0000060</div>
<div class="abs td lnk" style="left:458px;top:7px;transform:scaleX(1.0089);transform-origin:0 0"><span class="ul">April Black (aprilnblack@gmail.com)</span></div>
<div class="abs td" style="left:877px;top:7px;transform:scaleX(1.0168);transform-origin:0 0">aprilnblack@gmail.com</div>
<div class="abs td" style="left:1128px;top:7px;transform:scaleX(1);transform-origin:0 0">April</div>
<div class="abs td" style="left:1379px;top:7px;transform:scaleX(1);transform-origin:0 0">B</div>
<div class="abs td" style="left:1630px;top:7px;transform:scaleX(1.03);transform-origin:0 0">04/16/2024</div>
</div>
<div class="abs row sel" style="top:298px;height:27px">
<div class="abs td num" style="left:0px;top:7px">4</div>
<div class="abs cb" style="left:62px;top:5px"><svg class="abs" style="left:2px;top:3px" width="10" height="9" viewBox="0 0 10 9"><path d="M1.2 5.2 L4 7.6 L8.8 1.6" fill="none" stroke="#0176d3" stroke-width="1.9"/></svg></div>
<div class="abs td lnk" style="left:98px;top:7px;transform:scaleX(1.0007);transform-origin:0 0">a1OOt000000Gqu1MAC</div>
<div class="abs td" style="left:288px;top:7px">Order 0000070</div>
<div class="abs td lnk" style="left:458px;top:7px;transform:scaleX(0.9887);transform-origin:0 0"><span class="ul">Sandra Carter (scarter@test.org)</span></div>
<div class="abs td" style="left:877px;top:7px;transform:scaleX(1.0118);transform-origin:0 0">scarter@test.org</div>
<div class="abs td" style="left:1128px;top:7px;transform:scaleX(0.9512);transform-origin:0 0">Sandra</div>
<div class="abs td" style="left:1379px;top:7px;transform:scaleX(0.9629);transform-origin:0 0">Carter</div>
<div class="abs td" style="left:1630px;top:7px;transform:scaleX(1.03);transform-origin:0 0">04/17/2024</div>
</div>
<div class="abs row sel" style="top:325px;height:27px">
<div class="abs td num" style="left:0px;top:7px">5</div>
<div class="abs cb" style="left:62px;top:5px"><svg class="abs" style="left:2px;top:3px" width="10" height="9" viewBox="0 0 10 9"><path d="M1.2 5.2 L4 7.6 L8.8 1.6" fill="none" stroke="#0176d3" stroke-width="1.9"/></svg></div>
<div class="abs td lnk" style="left:98px;top:7px;transform:scaleX(0.9942);transform-origin:0 0">a1OOt000000GrQ9MAK</div>
<div class="abs td" style="left:288px;top:7px">Order 0000068</div>
<div class="abs td lnk" style="left:458px;top:7px;transform:scaleX(1.0189);transform-origin:0 0"><span class="ul">Carl Knight (carlknight@iamnimble.org)</span></div>
<div class="abs td" style="left:877px;top:7px;transform:scaleX(1.0203);transform-origin:0 0">carl.knight@gmail.com</div>
<div class="abs td" style="left:1128px;top:7px;transform:scaleX(1);transform-origin:0 0">Carl</div>
<div class="abs td" style="left:1379px;top:7px;transform:scaleX(1);transform-origin:0 0">Knight</div>
<div class="abs td" style="left:1630px;top:7px;transform:scaleX(1.03);transform-origin:0 0">04/17/2024</div>
</div>
<div class="abs row sel" style="top:352px;height:28px">
<div class="abs td num" style="left:0px;top:8px">6</div>
<div class="abs cb" style="left:62px;top:6px"><svg class="abs" style="left:2px;top:3px" width="10" height="9" viewBox="0 0 10 9"><path d="M1.2 5.2 L4 7.6 L8.8 1.6" fill="none" stroke="#0176d3" stroke-width="1.9"/></svg></div>
<div class="abs td lnk" style="left:98px;top:8px;transform:scaleX(0.9956);transform-origin:0 0">a1OOt000000GrgHMAS</div>
<div class="abs td" style="left:288px;top:8px">Order 0000069</div>
<div class="abs td lnk" style="left:458px;top:8px;transform:scaleX(0.9887);transform-origin:0 0"><span class="ul">Sandra Carter (scarter@test.org)</span></div>
<div class="abs td" style="left:877px;top:8px;transform:scaleX(1.0118);transform-origin:0 0">scarter@test.org</div>
<div class="abs td" style="left:1128px;top:8px;transform:scaleX(0.9512);transform-origin:0 0">Sandra</div>
<div class="abs td" style="left:1379px;top:8px;transform:scaleX(0.9629);transform-origin:0 0">Carter</div>
<div class="abs td" style="left:1630px;top:8px;transform:scaleX(1.03);transform-origin:0 0">04/17/2024</div>
</div>
<div class="abs row unsel" style="top:380px;height:27px">
<div class="abs td num" style="left:0px;top:7px">7</div>
<div class="abs cb" style="left:62px;top:5px"></div>
<div class="abs td lnk" style="left:98px;top:7px;transform:scaleX(0.9985);transform-origin:0 0">a1OOt000000HU9lMAG</div>
<div class="abs td" style="left:288px;top:7px">Order 0000073</div>
<div class="abs td" style="left:877px;top:7px;transform:scaleX(1.0016);transform-origin:0 0">kate.costa@gmail.com</div>
<div class="abs td" style="left:1128px;top:7px;transform:scaleX(0.9346);transform-origin:0 0">Kate</div>
<div class="abs td" style="left:1379px;top:7px;transform:scaleX(0.9515);transform-origin:0 0">Costa</div>
<div class="abs td" style="left:1630px;top:7px;transform:scaleX(1.03);transform-origin:0 0">04/19/2024</div>
</div>
<div class="abs row unsel" style="top:407px;height:27px">
<div class="abs td num" style="left:0px;top:7px">8</div>
<div class="abs cb" style="left:62px;top:5px"></div>
<div class="abs td lnk" style="left:98px;top:7px;transform:scaleX(0.9949);transform-origin:0 0">a1OOt000000IOK1MAO</div>
<div class="abs td" style="left:288px;top:7px">Order 0000086</div>
<div class="abs td" style="left:877px;top:7px;transform:scaleX(1.0079);transform-origin:0 0">scarter@myorg.com</div>
<div class="abs td" style="left:1128px;top:7px;transform:scaleX(0.9389);transform-origin:0 0">Sandy</div>
<div class="abs td" style="left:1379px;top:7px;transform:scaleX(0.9657);transform-origin:0 0">Carter</div>
<div class="abs td" style="left:1630px;top:7px;transform:scaleX(1.03);transform-origin:0 0">04/26/2024</div>
</div>
<div class="abs row unsel" style="top:434px;height:27px">
<div class="abs td num" style="left:0px;top:7px">9</div>
<div class="abs cb" style="left:62px;top:5px"></div>
<div class="abs td lnk" style="left:98px;top:7px;transform:scaleX(0.9971);transform-origin:0 0">a1OOt000000IOLdMAO</div>
<div class="abs td" style="left:288px;top:7px">Order 0000087</div>
<div class="abs td" style="left:877px;top:7px;transform:scaleX(1.008);transform-origin:0 0">jennys@myorg.com</div>
<div class="abs td" style="left:1128px;top:7px;transform:scaleX(0.9353);transform-origin:0 0">Jenny</div>
<div class="abs td" style="left:1379px;top:7px;transform:scaleX(1);transform-origin:0 0">Smith</div>
<div class="abs td" style="left:1630px;top:7px;transform:scaleX(1.03);transform-origin:0 0">04/26/2024</div>
</div>
<div class="abs row sel" style="top:461px;height:27px">
<div class="abs td num" style="left:0px;top:7px">10</div>
<div class="abs cb" style="left:62px;top:5px"><svg class="abs" style="left:2px;top:3px" width="10" height="9" viewBox="0 0 10 9"><path d="M1.2 5.2 L4 7.6 L8.8 1.6" fill="none" stroke="#0176d3" stroke-width="1.9"/></svg></div>
<div class="abs td lnk" style="left:98px;top:7px;transform:scaleX(0.9971);transform-origin:0 0">a1OOt000000IONFMA4</div>
<div class="abs td" style="left:288px;top:7px">Order 0000088</div>
<div class="abs td lnk" style="left:458px;top:7px;transform:scaleX(1.0013);transform-origin:0 0"><span class="ul">Rhonda Willis</span></div>
<div class="abs td" style="left:877px;top:7px;transform:scaleX(1.0119);transform-origin:0 0">rwillis@myemail.com</div>
<div class="abs td" style="left:1128px;top:7px;transform:scaleX(0.9689);transform-origin:0 0">Rhonda</div>
<div class="abs td" style="left:1379px;top:7px;transform:scaleX(1);transform-origin:0 0">Willis</div>
<div class="abs td" style="left:1630px;top:7px;transform:scaleX(1.03);transform-origin:0 0">04/26/2024</div>
</div>
<div class="abs row sel" style="top:488px;height:27px">
<div class="abs td num" style="left:0px;top:7px">11</div>
<div class="abs cb" style="left:62px;top:5px"><svg class="abs" style="left:2px;top:3px" width="10" height="9" viewBox="0 0 10 9"><path d="M1.2 5.2 L4 7.6 L8.8 1.6" fill="none" stroke="#0176d3" stroke-width="1.9"/></svg></div>
<div class="abs td lnk" style="left:98px;top:7px;transform:scaleX(1.0022);transform-origin:0 0">a1OOt000000IOOrMAO</div>
<div class="abs td" style="left:288px;top:7px">Order 0000089</div>
<div class="abs td lnk" style="left:458px;top:7px;transform:scaleX(0.9834);transform-origin:0 0"><span class="ul">Kelly Jones (kjones@test.org)</span></div>
<div class="abs td" style="left:877px;top:7px;transform:scaleX(1.0125);transform-origin:0 0">kjones@myorg.com</div>
<div class="abs td" style="left:1128px;top:7px;transform:scaleX(0.9286);transform-origin:0 0">Kelly</div>
<div class="abs td" style="left:1379px;top:7px;transform:scaleX(0.9394);transform-origin:0 0">Jones</div>
<div class="abs td" style="left:1630px;top:7px;transform:scaleX(1.03);transform-origin:0 0">04/26/2024</div>
</div>
<div class="abs row sel" style="top:515px;height:27px">
<div class="abs td num" style="left:0px;top:7px">12</div>
<div class="abs cb" style="left:62px;top:5px"><svg class="abs" style="left:2px;top:3px" width="10" height="9" viewBox="0 0 10 9"><path d="M1.2 5.2 L4 7.6 L8.8 1.6" fill="none" stroke="#0176d3" stroke-width="1.9"/></svg></div>
<div class="abs td lnk" style="left:98px;top:7px;transform:scaleX(0.9926);transform-origin:0 0">a1OOt000000IOThMAO</div>
<div class="abs td" style="left:288px;top:7px">Order 0000090</div>
<div class="abs td lnk" style="left:458px;top:7px;transform:scaleX(1.009);transform-origin:0 0"><span class="ul">Lori Ellis (demo+le@nimbleuser.com)</span></div>
<div class="abs td" style="left:877px;top:7px;transform:scaleX(1.0205);transform-origin:0 0">lori.ellis@myorg.com</div>
<div class="abs td" style="left:1128px;top:7px;transform:scaleX(1);transform-origin:0 0">Lori</div>
<div class="abs td" style="left:1379px;top:7px;transform:scaleX(0.887);transform-origin:0 0">Ellis</div>
<div class="abs td" style="left:1630px;top:7px;transform:scaleX(1.03);transform-origin:0 0">04/26/2024</div>
</div>
<div class="abs row sel" style="top:542px;height:27px">
<div class="abs td num" style="left:0px;top:7px">13</div>
<div class="abs cb" style="left:62px;top:5px"><svg class="abs" style="left:2px;top:3px" width="10" height="9" viewBox="0 0 10 9"><path d="M1.2 5.2 L4 7.6 L8.8 1.6" fill="none" stroke="#0176d3" stroke-width="1.9"/></svg></div>
<div class="abs td lnk" style="left:98px;top:7px;transform:scaleX(0.9799);transform-origin:0 0">a1OOt000000IOVJMA4</div>
<div class="abs td" style="left:288px;top:7px">Order 0000091</div>
<div class="abs td lnk" style="left:458px;top:7px;transform:scaleX(1.026);transform-origin:0 0"><span class="ul">Michael Hartzler (demo+mh@nimbleuser.com)</span></div>
<div class="abs td" style="left:877px;top:7px;transform:scaleX(1.0183);transform-origin:0 0">michael.hartzler@myorg.com</div>
<div class="abs td" style="left:1128px;top:7px;transform:scaleX(1.0326);transform-origin:0 0">Michael</div>
<div class="abs td" style="left:1379px;top:7px;transform:scaleX(1);transform-origin:0 0">Hartzler</div>
<div class="abs td" style="left:1630px;top:7px;transform:scaleX(1.03);transform-origin:0 0">04/26/2024</div>
</div>
<div class="abs" style="left:3px;top:569px;width:1877px;height:2px;background:#c9c9c9"></div>
<div class="abs bar" style="top:571px;height:56px"></div>
<div class="abs btn cancel" style="left:871px;top:583px">Cancel</div><div class="abs btn save" style="left:951px;top:583px">Save</div>
</div></body></html>
